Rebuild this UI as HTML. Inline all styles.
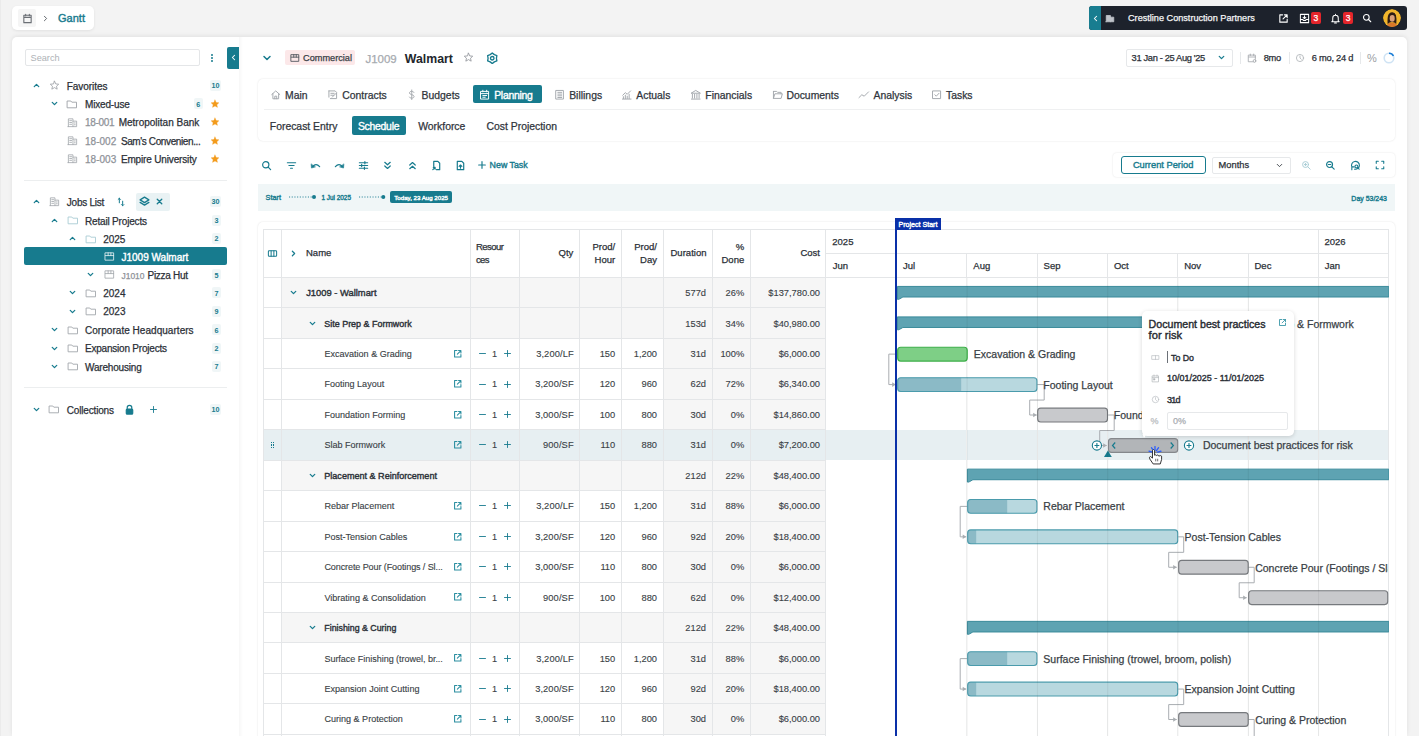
<!DOCTYPE html><html><head><meta charset="utf-8"><style>
*{box-sizing:border-box}
html,body{margin:0;padding:0}
body{width:1419px;height:736px;overflow:hidden;position:relative;background:#f3f3f3;font-family:"Liberation Sans", sans-serif}
.t{position:absolute;white-space:nowrap}
.m{-webkit-text-stroke:0.25px currentColor}
.sm{-webkit-text-stroke:0.12px currentColor}
.md{-webkit-text-stroke:0.38px currentColor}
svg{display:block}
</style></head><body><div style="position:absolute;left:12.00px;top:6.00px;width:82.00px;height:24.00px;background:#fff;border-radius:5px;box-shadow:0 1px 3px rgba(0,0,0,.08)"></div>
<div style="position:absolute;left:18.00px;top:9.00px;width:18.00px;height:18.00px;background:#f5f5f5;border-radius:2px"></div>
<svg style="position:absolute;left:21.50px;top:12.50px;" width="11" height="11" viewBox="0 0 12 12" fill="none"><g stroke="#6b6f75" stroke-width="1.2" stroke-linecap="round" stroke-linejoin="round" fill="none"><path d="M2 2.5 H10 V10.5 H2 Z M2 4.8 H10 M4 1.3 V3 M8 1.3 V3"/></g></svg>
<svg style="position:absolute;left:41.00px;top:13.50px;" width="9" height="9" viewBox="0 0 12 12" fill="none"><g stroke="#555a60" stroke-width="1.2" stroke-linecap="round" stroke-linejoin="round" fill="none"><path d="M4.5 3 L7.5 6 L4.5 9"/></g></svg>
<div class="t md" style="left:58.00px;top:13.00px;font-size:11.039417364083562px;line-height:11.039417364083562px;color:#177b8e;font-weight:400;letter-spacing:0.000px;">Gantt</div>
<div style="position:absolute;left:1089.00px;top:6.00px;width:318.00px;height:24.00px;background:#1d222c;border-radius:3px"></div>
<div style="position:absolute;left:1089.00px;top:6.00px;width:12.00px;height:24.00px;background:#187d90;border-radius:3px 0 0 3px"></div>
<svg style="position:absolute;left:1090.50px;top:13.50px;" width="9" height="9" viewBox="0 0 12 12" fill="none"><g stroke="#fff" stroke-width="1.4" stroke-linecap="round" stroke-linejoin="round" fill="none"><path d="M7.5 3 L4.5 6 L7.5 9"/></g></svg>
<svg style="position:absolute;left:1105.00px;top:13.00px;" width="10" height="10" viewBox="0 0 12 12" fill="none"><g stroke="#bfc3c9" stroke-width="1" stroke-linecap="round" stroke-linejoin="round" fill="none"><path d="M1.5 10.5 V3 H6.5 V10.5 M6.5 5 H10.5 V10.5 H1" fill="#bfc3c9"/></g></svg>
<div class="t m" style="left:1128.00px;top:14.00px;font-size:9.15px;line-height:9.15px;color:#f4f5f6;font-weight:400;">Crestline Construction Partners</div>
<svg style="position:absolute;left:1277.50px;top:12.50px;" width="11" height="11" viewBox="0 0 12 12" fill="none"><g stroke="#fff" stroke-width="1.2" stroke-linecap="round" stroke-linejoin="round" fill="none"><path d="M5 2 H2 V10 H10 V7 M7 2 H10 V5 M10 2 L5.5 6.5"/></g></svg>
<svg style="position:absolute;left:1298.50px;top:12.50px;" width="11" height="11" viewBox="0 0 12 12" fill="none"><g stroke="#fff" stroke-width="1.1" stroke-linecap="round" stroke-linejoin="round" fill="none"><path d="M1.5 1.5 H10.5 V10.5 H1.5 Z M1.5 7 H4 L5 8.3 H7 L8 7 H10.5 M6 3 V6 M4.5 4.8 L6 6.2 L7.5 4.8"/></g></svg>
<div style="position:absolute;left:1311.00px;top:12.00px;width:9.50px;height:12.00px;background:#e4252b;border-radius:2px"></div>
<div class="t m" style="left:1165.75px;width:300px;text-align:center;top:14.00px;font-size:8.5px;line-height:8.5px;color:#fff;font-weight:400;">3</div>
<svg style="position:absolute;left:1330.00px;top:12.50px;" width="11" height="11" viewBox="0 0 12 12" fill="none"><g stroke="#fff" stroke-width="1.1" stroke-linecap="round" stroke-linejoin="round" fill="none"><path d="M3 8.5 V5.5 A3 3 0 0 1 9 5.5 V8.5 L10 9.5 H2 Z M5 10.8 H7 M6 1.5 V2.5"/></g></svg>
<div style="position:absolute;left:1343.30px;top:12.00px;width:9.30px;height:12.00px;background:#e4252b;border-radius:2px"></div>
<div class="t m" style="left:1198.00px;width:300px;text-align:center;top:14.00px;font-size:8.5px;line-height:8.5px;color:#fff;font-weight:400;">3</div>
<svg style="position:absolute;left:1362.00px;top:13.00px;" width="10" height="10" viewBox="0 0 12 12" fill="none"><g stroke="#fff" stroke-width="1.3" stroke-linecap="round" stroke-linejoin="round" fill="none"><circle cx="5.2" cy="5.2" r="3.4"/><path d="M7.8 7.8 L10.5 10.5"/></g></svg>
<svg style="position:absolute;left:1383px;top:9px" width="18" height="18" viewBox="0 0 18 18"><defs><clipPath id="av"><circle cx="9" cy="9" r="9"/></clipPath></defs><g clip-path="url(#av)"><circle cx="9" cy="9" r="9" fill="#f0b52c"/><path d="M3 19 Q3.5 14 9 13.5 Q14.5 14 15 19 Z" fill="#d9782a"/><path d="M4.6 15 Q4.2 8 5.5 5.5 Q7 3 9.3 3.2 Q12 3.3 12.9 6 Q13.8 9 13.3 15 Q11.5 13 9 13 Q6.5 13 4.6 15 Z" fill="#2e1c14"/><ellipse cx="9.2" cy="9.4" rx="2.5" ry="3.3" fill="#d8a07a"/></g></svg>
<div style="position:absolute;left:0.00px;top:0.00px;width:1.00px;height:736.00px;background:#ebebeb"></div>
<div style="position:absolute;left:12.00px;top:37.00px;width:1395.00px;height:699.00px;background:#fff;border-radius:5px 5px 0 0;box-shadow:0 -1px 4px rgba(0,0,0,.08)"></div>
<div style="position:absolute;left:239.00px;top:37.00px;width:4.00px;height:699.00px;background:linear-gradient(90deg,#f7f7f7,#fff)"></div>
<div style="position:absolute;left:24.50px;top:49.30px;width:175.20px;height:17.20px;border:1px solid #e4e6e8;border-radius:2px;background:#fff"></div>
<div class="t m" style="left:30.50px;top:54.00px;font-size:9.2px;line-height:9.2px;color:#aeb2b6;font-weight:400;-webkit-text-stroke:0">Search</div>
<div style="position:absolute;left:211.00px;top:53.70px;width:2.00px;height:2.00px;background:#177b8e;border-radius:1px"></div>
<div style="position:absolute;left:211.00px;top:57.00px;width:2.00px;height:2.00px;background:#177b8e;border-radius:1px"></div>
<div style="position:absolute;left:211.00px;top:60.30px;width:2.00px;height:2.00px;background:#177b8e;border-radius:1px"></div>
<div style="position:absolute;left:227.30px;top:46.50px;width:11.80px;height:22.50px;background:#177b8e;border-radius:2px 0 0 2px"></div>
<svg style="position:absolute;left:228.70px;top:53.20px;" width="9" height="9" viewBox="0 0 12 12" fill="none"><g stroke="#fff" stroke-width="1.4" stroke-linecap="round" stroke-linejoin="round" fill="none"><path d="M7.5 3 L4.5 6 L7.5 9"/></g></svg>
<svg style="position:absolute;left:31.80px;top:81.00px;" width="9" height="9" viewBox="0 0 12 12" fill="none"><g stroke="#177b8e" stroke-width="1.7" stroke-linecap="round" stroke-linejoin="round" fill="none"><path d="M3 7.5 L6 4.5 L9 7.5"/></g></svg>
<svg style="position:absolute;left:48.90px;top:80.00px;" width="11" height="11" viewBox="0 0 12 12" fill="none"><g stroke="#9a9ea4" stroke-width="0.9" stroke-linecap="round" stroke-linejoin="round" fill="none"><path d="M6 1.3 L7.4 4.3 L10.6 4.6 L8.2 6.8 L8.9 10 L6 8.3 L3.1 10 L3.8 6.8 L1.4 4.6 L4.6 4.3 Z"/></g></svg>
<div class="t m" style="left:66.80px;top:82.00px;font-size:10px;line-height:10px;color:#2b3037;font-weight:400;letter-spacing:-0.066px;">Favorites</div>
<div style="position:absolute;left:210.00px;top:80.00px;width:11.00px;height:11.00px;background:#f0f6f7;border-radius:2px"></div>
<div class="t" style="left:65.50px;width:300px;text-align:center;top:82.00px;font-size:7.2px;line-height:7.2px;color:#177b8e;font-weight:700;">10</div>
<svg style="position:absolute;left:49.90px;top:99.40px;" width="9" height="9" viewBox="0 0 12 12" fill="none"><g stroke="#177b8e" stroke-width="1.7" stroke-linecap="round" stroke-linejoin="round" fill="none"><path d="M3 4.5 L6 7.5 L9 4.5"/></g></svg>
<svg style="position:absolute;left:66.30px;top:97.90px;" width="12" height="12" viewBox="0 0 12 12" fill="none"><g stroke="#9ea2a7" stroke-width="0.9" stroke-linecap="round" stroke-linejoin="round" fill="none"><path d="M1.5 3 H4.8 L5.8 4.2 H10.5 V9.8 H1.5 Z"/></g></svg>
<div class="t m" style="left:85.00px;top:100.00px;font-size:10px;line-height:10px;color:#2b3037;font-weight:400;letter-spacing:-0.166px;">Mixed-use</div>
<div style="position:absolute;left:193.70px;top:98.40px;width:9.00px;height:11.00px;background:#f0f6f7;border-radius:2px"></div>
<div class="t" style="left:48.20px;width:300px;text-align:center;top:101.00px;font-size:7.2px;line-height:7.2px;color:#177b8e;font-weight:700;">6</div>
<svg style="position:absolute;left:210.00px;top:98.90px;" width="10" height="10" viewBox="0 0 12 12" fill="none"><g stroke="#f39b1c" stroke-width="0.5" stroke-linecap="round" stroke-linejoin="round" fill="none"><path d="M6 1.3 L7.4 4.3 L10.6 4.6 L8.2 6.8 L8.9 10 L6 8.3 L3.1 10 L3.8 6.8 L1.4 4.6 L4.6 4.3 Z" fill="#f39b1c" stroke="#f39b1c"/></g></svg>
<svg style="position:absolute;left:67.00px;top:116.60px;" width="11" height="11" viewBox="0 0 12 12" fill="none"><g stroke="#a3a7ac" stroke-width="0.9" stroke-linecap="round" stroke-linejoin="round" fill="none"><path d="M1.5 10.5 V2 H6.5 V10.5 M6.5 4.5 H10.5 V10.5 H1 M3 4 H5 M3 6 H5 M3 8 H5 M8 6.5 H9 M8 8.5 H9"/></g></svg>
<div class="t m" style="left:85.00px;top:118.00px;font-size:10px;line-height:10px;color:#8e9298;font-weight:400;letter-spacing:-0.308px;">18-001</div>
<div class="t m" style="left:118.70px;top:118.00px;font-size:10px;line-height:10px;color:#2b3037;font-weight:400;letter-spacing:-0.000px;">Metropolitan Bank</div>
<svg style="position:absolute;left:210.00px;top:117.10px;" width="10" height="10" viewBox="0 0 12 12" fill="none"><g stroke="#f39b1c" stroke-width="0.5" stroke-linecap="round" stroke-linejoin="round" fill="none"><path d="M6 1.3 L7.4 4.3 L10.6 4.6 L8.2 6.8 L8.9 10 L6 8.3 L3.1 10 L3.8 6.8 L1.4 4.6 L4.6 4.3 Z" fill="#f39b1c" stroke="#f39b1c"/></g></svg>
<svg style="position:absolute;left:67.00px;top:135.00px;" width="11" height="11" viewBox="0 0 12 12" fill="none"><g stroke="#a3a7ac" stroke-width="0.9" stroke-linecap="round" stroke-linejoin="round" fill="none"><path d="M1.5 10.5 V2 H6.5 V10.5 M6.5 4.5 H10.5 V10.5 H1 M3 4 H5 M3 6 H5 M3 8 H5 M8 6.5 H9 M8 8.5 H9"/></g></svg>
<div class="t m" style="left:85.00px;top:137.00px;font-size:10px;line-height:10px;color:#8e9298;font-weight:400;letter-spacing:0.012px;">18-002</div>
<div class="t m" style="left:120.90px;top:137.00px;font-size:10px;line-height:10px;color:#2b3037;font-weight:400;letter-spacing:-0.382px;">Sam&#39;s Convenien...</div>
<svg style="position:absolute;left:210.00px;top:135.50px;" width="10" height="10" viewBox="0 0 12 12" fill="none"><g stroke="#f39b1c" stroke-width="0.5" stroke-linecap="round" stroke-linejoin="round" fill="none"><path d="M6 1.3 L7.4 4.3 L10.6 4.6 L8.2 6.8 L8.9 10 L6 8.3 L3.1 10 L3.8 6.8 L1.4 4.6 L4.6 4.3 Z" fill="#f39b1c" stroke="#f39b1c"/></g></svg>
<svg style="position:absolute;left:67.00px;top:153.20px;" width="11" height="11" viewBox="0 0 12 12" fill="none"><g stroke="#a3a7ac" stroke-width="0.9" stroke-linecap="round" stroke-linejoin="round" fill="none"><path d="M1.5 10.5 V2 H6.5 V10.5 M6.5 4.5 H10.5 V10.5 H1 M3 4 H5 M3 6 H5 M3 8 H5 M8 6.5 H9 M8 8.5 H9"/></g></svg>
<div class="t m" style="left:85.00px;top:155.00px;font-size:10px;line-height:10px;color:#8e9298;font-weight:400;letter-spacing:0.012px;">18-003</div>
<div class="t m" style="left:120.90px;top:155.00px;font-size:10px;line-height:10px;color:#2b3037;font-weight:400;letter-spacing:-0.153px;">Empire University</div>
<svg style="position:absolute;left:210.00px;top:153.70px;" width="10" height="10" viewBox="0 0 12 12" fill="none"><g stroke="#f39b1c" stroke-width="0.5" stroke-linecap="round" stroke-linejoin="round" fill="none"><path d="M6 1.3 L7.4 4.3 L10.6 4.6 L8.2 6.8 L8.9 10 L6 8.3 L3.1 10 L3.8 6.8 L1.4 4.6 L4.6 4.3 Z" fill="#f39b1c" stroke="#f39b1c"/></g></svg>
<div style="position:absolute;left:24.00px;top:179.80px;width:203.00px;height:1.00px;background:#eceeef"></div>
<svg style="position:absolute;left:31.80px;top:197.30px;" width="9" height="9" viewBox="0 0 12 12" fill="none"><g stroke="#177b8e" stroke-width="1.7" stroke-linecap="round" stroke-linejoin="round" fill="none"><path d="M3 7.5 L6 4.5 L9 7.5"/></g></svg>
<svg style="position:absolute;left:48.90px;top:196.30px;" width="11" height="11" viewBox="0 0 12 12" fill="none"><g stroke="#a3a7ac" stroke-width="0.9" stroke-linecap="round" stroke-linejoin="round" fill="none"><path d="M1.5 10.5 V2 H6.5 V10.5 M6.5 4.5 H10.5 V10.5 H1 M3 4 H5 M3 6 H5 M3 8 H5 M8 6.5 H9 M8 8.5 H9"/></g></svg>
<div class="t m" style="left:66.80px;top:198.00px;font-size:10px;line-height:10px;color:#2b3037;font-weight:400;letter-spacing:-0.233px;">Jobs List</div>
<svg style="position:absolute;left:115.60px;top:196.80px;" width="10" height="10" viewBox="0 0 12 12" fill="none"><g stroke="#177b8e" stroke-width="1.2" stroke-linecap="round" stroke-linejoin="round" fill="none"><path d="M4 7 V1.5 M2.6 2.9 L4 1.5 L5.4 2.9 M8 5 V10.5 M6.6 9.1 L8 10.5 L9.4 9.1"/></g></svg>
<div style="position:absolute;left:135.60px;top:192.60px;width:34.40px;height:18.00px;background:#e9f2f4;border-radius:2px"></div>
<svg style="position:absolute;left:139.30px;top:196.30px;" width="11" height="11" viewBox="0 0 12 12" fill="none"><g stroke="#177b8e" stroke-width="1.4" stroke-linecap="round" stroke-linejoin="round" fill="none"><path d="M6 1.2 L10.8 4.2 L6 7.2 L1.2 4.2 Z M1.2 7 L6 10 L10.8 7"/></g></svg>
<svg style="position:absolute;left:155.20px;top:197.30px;" width="9" height="9" viewBox="0 0 12 12" fill="none"><g stroke="#177b8e" stroke-width="1.8" stroke-linecap="round" stroke-linejoin="round" fill="none"><path d="M3 3 L9 9 M9 3 L3 9"/></g></svg>
<div style="position:absolute;left:210.00px;top:196.30px;width:11.00px;height:11.00px;background:#f0f6f7;border-radius:2px"></div>
<div class="t" style="left:65.50px;width:300px;text-align:center;top:198.00px;font-size:7.2px;line-height:7.2px;color:#177b8e;font-weight:700;">30</div>
<svg style="position:absolute;left:50.00px;top:215.80px;" width="9" height="9" viewBox="0 0 12 12" fill="none"><g stroke="#177b8e" stroke-width="1.7" stroke-linecap="round" stroke-linejoin="round" fill="none"><path d="M3 7.5 L6 4.5 L9 7.5"/></g></svg>
<svg style="position:absolute;left:66.60px;top:214.30px;" width="12" height="12" viewBox="0 0 12 12" fill="none"><g stroke="#a9ccd4" stroke-width="0.9" stroke-linecap="round" stroke-linejoin="round" fill="none"><path d="M1.5 3 H4.8 L5.8 4.2 H10.5 V9.8 H1.5 Z"/></g></svg>
<div class="t m" style="left:85.00px;top:217.00px;font-size:10px;line-height:10px;color:#2b3037;font-weight:400;letter-spacing:-0.176px;">Retail Projects</div>
<div style="position:absolute;left:212.00px;top:214.80px;width:9.00px;height:11.00px;background:#f0f6f7;border-radius:2px"></div>
<div class="t" style="left:66.50px;width:300px;text-align:center;top:217.00px;font-size:7.2px;line-height:7.2px;color:#177b8e;font-weight:700;">3</div>
<svg style="position:absolute;left:68.20px;top:234.00px;" width="9" height="9" viewBox="0 0 12 12" fill="none"><g stroke="#177b8e" stroke-width="1.7" stroke-linecap="round" stroke-linejoin="round" fill="none"><path d="M3 7.5 L6 4.5 L9 7.5"/></g></svg>
<svg style="position:absolute;left:84.80px;top:232.50px;" width="12" height="12" viewBox="0 0 12 12" fill="none"><g stroke="#a9ccd4" stroke-width="0.9" stroke-linecap="round" stroke-linejoin="round" fill="none"><path d="M1.5 3 H4.8 L5.8 4.2 H10.5 V9.8 H1.5 Z"/></g></svg>
<div class="t m" style="left:103.20px;top:235.00px;font-size:10px;line-height:10px;color:#2b3037;font-weight:400;letter-spacing:-0.082px;">2025</div>
<div style="position:absolute;left:212.00px;top:233.00px;width:9.00px;height:11.00px;background:#f0f6f7;border-radius:2px"></div>
<div class="t" style="left:66.50px;width:300px;text-align:center;top:235.00px;font-size:7.2px;line-height:7.2px;color:#177b8e;font-weight:700;">2</div>
<div style="position:absolute;left:24.00px;top:247.30px;width:203.00px;height:18.00px;background:#177b8e;border-radius:2px"></div>
<svg style="position:absolute;left:103.50px;top:250.80px;" width="11" height="11" viewBox="0 0 12 12" fill="none"><g stroke="#e6f1f3" stroke-width="0.9" stroke-linecap="round" stroke-linejoin="round" fill="none"><path d="M1.5 2 H10.5 V10 H1.5 Z M1.5 5 H10.5 M4.5 2 V5 M7.5 2 V5"/></g></svg>
<div class="t md" style="left:121.50px;top:253.00px;font-size:10.018457512674937px;line-height:10.018457512674937px;color:#fff;font-weight:400;letter-spacing:0.000px;">J1009 Walmart</div>
<svg style="position:absolute;left:86.40px;top:270.40px;" width="9" height="9" viewBox="0 0 12 12" fill="none"><g stroke="#177b8e" stroke-width="1.7" stroke-linecap="round" stroke-linejoin="round" fill="none"><path d="M3 4.5 L6 7.5 L9 4.5"/></g></svg>
<svg style="position:absolute;left:103.50px;top:269.40px;" width="11" height="11" viewBox="0 0 12 12" fill="none"><g stroke="#a3a7ac" stroke-width="0.9" stroke-linecap="round" stroke-linejoin="round" fill="none"><path d="M1.5 2 H10.5 V10 H1.5 Z M1.5 5 H10.5 M4.5 2 V5 M7.5 2 V5"/></g></svg>
<div class="t m" style="left:121.50px;top:272.00px;font-size:8.441335015483427px;line-height:8.441335015483427px;color:#8e9298;font-weight:400;letter-spacing:0.000px;">J1010</div>
<div class="t m" style="left:147.50px;top:271.00px;font-size:10px;line-height:10px;color:#2b3037;font-weight:400;letter-spacing:-0.287px;">Pizza Hut</div>
<div style="position:absolute;left:212.00px;top:269.40px;width:9.00px;height:11.00px;background:#f0f6f7;border-radius:2px"></div>
<div class="t" style="left:66.50px;width:300px;text-align:center;top:272.00px;font-size:7.2px;line-height:7.2px;color:#177b8e;font-weight:700;">5</div>
<svg style="position:absolute;left:68.20px;top:288.40px;" width="9" height="9" viewBox="0 0 12 12" fill="none"><g stroke="#177b8e" stroke-width="1.7" stroke-linecap="round" stroke-linejoin="round" fill="none"><path d="M3 4.5 L6 7.5 L9 4.5"/></g></svg>
<svg style="position:absolute;left:84.80px;top:286.90px;" width="12" height="12" viewBox="0 0 12 12" fill="none"><g stroke="#a3a7ac" stroke-width="0.9" stroke-linecap="round" stroke-linejoin="round" fill="none"><path d="M1.5 3 H4.8 L5.8 4.2 H10.5 V9.8 H1.5 Z"/></g></svg>
<div class="t m" style="left:103.20px;top:289.00px;font-size:10px;line-height:10px;color:#2b3037;font-weight:400;letter-spacing:0.018px;">2024</div>
<div style="position:absolute;left:212.00px;top:287.40px;width:9.00px;height:11.00px;background:#f0f6f7;border-radius:2px"></div>
<div class="t" style="left:66.50px;width:300px;text-align:center;top:290.00px;font-size:7.2px;line-height:7.2px;color:#177b8e;font-weight:700;">7</div>
<svg style="position:absolute;left:68.20px;top:306.70px;" width="9" height="9" viewBox="0 0 12 12" fill="none"><g stroke="#177b8e" stroke-width="1.7" stroke-linecap="round" stroke-linejoin="round" fill="none"><path d="M3 4.5 L6 7.5 L9 4.5"/></g></svg>
<svg style="position:absolute;left:84.80px;top:305.20px;" width="12" height="12" viewBox="0 0 12 12" fill="none"><g stroke="#a3a7ac" stroke-width="0.9" stroke-linecap="round" stroke-linejoin="round" fill="none"><path d="M1.5 3 H4.8 L5.8 4.2 H10.5 V9.8 H1.5 Z"/></g></svg>
<div class="t m" style="left:103.20px;top:307.00px;font-size:10px;line-height:10px;color:#2b3037;font-weight:400;letter-spacing:0.018px;">2023</div>
<div style="position:absolute;left:212.00px;top:305.70px;width:9.00px;height:11.00px;background:#f0f6f7;border-radius:2px"></div>
<div class="t" style="left:66.50px;width:300px;text-align:center;top:308.00px;font-size:7.2px;line-height:7.2px;color:#177b8e;font-weight:700;">9</div>
<svg style="position:absolute;left:50.00px;top:325.40px;" width="9" height="9" viewBox="0 0 12 12" fill="none"><g stroke="#177b8e" stroke-width="1.7" stroke-linecap="round" stroke-linejoin="round" fill="none"><path d="M3 4.5 L6 7.5 L9 4.5"/></g></svg>
<svg style="position:absolute;left:66.60px;top:323.90px;" width="12" height="12" viewBox="0 0 12 12" fill="none"><g stroke="#a3a7ac" stroke-width="0.9" stroke-linecap="round" stroke-linejoin="round" fill="none"><path d="M1.5 3 H4.8 L5.8 4.2 H10.5 V9.8 H1.5 Z"/></g></svg>
<div class="t m" style="left:85.00px;top:326.00px;font-size:10px;line-height:10px;color:#2b3037;font-weight:400;letter-spacing:0.036px;">Corporate Headquarters</div>
<div style="position:absolute;left:212.00px;top:324.40px;width:9.00px;height:11.00px;background:#f0f6f7;border-radius:2px"></div>
<div class="t" style="left:66.50px;width:300px;text-align:center;top:327.00px;font-size:7.2px;line-height:7.2px;color:#177b8e;font-weight:700;">6</div>
<svg style="position:absolute;left:50.00px;top:343.50px;" width="9" height="9" viewBox="0 0 12 12" fill="none"><g stroke="#177b8e" stroke-width="1.7" stroke-linecap="round" stroke-linejoin="round" fill="none"><path d="M3 4.5 L6 7.5 L9 4.5"/></g></svg>
<svg style="position:absolute;left:66.60px;top:342.00px;" width="12" height="12" viewBox="0 0 12 12" fill="none"><g stroke="#a3a7ac" stroke-width="0.9" stroke-linecap="round" stroke-linejoin="round" fill="none"><path d="M1.5 3 H4.8 L5.8 4.2 H10.5 V9.8 H1.5 Z"/></g></svg>
<div class="t m" style="left:85.00px;top:344.00px;font-size:10px;line-height:10px;color:#2b3037;font-weight:400;letter-spacing:-0.212px;">Expansion Projects</div>
<div style="position:absolute;left:212.00px;top:342.50px;width:9.00px;height:11.00px;background:#f0f6f7;border-radius:2px"></div>
<div class="t" style="left:66.50px;width:300px;text-align:center;top:345.00px;font-size:7.2px;line-height:7.2px;color:#177b8e;font-weight:700;">2</div>
<svg style="position:absolute;left:50.00px;top:361.90px;" width="9" height="9" viewBox="0 0 12 12" fill="none"><g stroke="#177b8e" stroke-width="1.7" stroke-linecap="round" stroke-linejoin="round" fill="none"><path d="M3 4.5 L6 7.5 L9 4.5"/></g></svg>
<svg style="position:absolute;left:66.60px;top:360.40px;" width="12" height="12" viewBox="0 0 12 12" fill="none"><g stroke="#a3a7ac" stroke-width="0.9" stroke-linecap="round" stroke-linejoin="round" fill="none"><path d="M1.5 3 H4.8 L5.8 4.2 H10.5 V9.8 H1.5 Z"/></g></svg>
<div class="t m" style="left:85.00px;top:363.00px;font-size:10px;line-height:10px;color:#2b3037;font-weight:400;letter-spacing:-0.175px;">Warehousing</div>
<div style="position:absolute;left:212.00px;top:360.90px;width:9.00px;height:11.00px;background:#f0f6f7;border-radius:2px"></div>
<div class="t" style="left:66.50px;width:300px;text-align:center;top:363.00px;font-size:7.2px;line-height:7.2px;color:#177b8e;font-weight:700;">7</div>
<div style="position:absolute;left:24.00px;top:386.80px;width:203.00px;height:1.00px;background:#eceeef"></div>
<svg style="position:absolute;left:31.80px;top:404.90px;" width="9" height="9" viewBox="0 0 12 12" fill="none"><g stroke="#177b8e" stroke-width="1.7" stroke-linecap="round" stroke-linejoin="round" fill="none"><path d="M3 4.5 L6 7.5 L9 4.5"/></g></svg>
<svg style="position:absolute;left:48.40px;top:403.40px;" width="12" height="12" viewBox="0 0 12 12" fill="none"><g stroke="#a3a7ac" stroke-width="0.9" stroke-linecap="round" stroke-linejoin="round" fill="none"><path d="M1.5 3 H4.8 L5.8 4.2 H10.5 V9.8 H1.5 Z"/></g></svg>
<div class="t m" style="left:66.80px;top:406.00px;font-size:10px;line-height:10px;color:#2b3037;font-weight:400;letter-spacing:-0.171px;">Collections</div>
<svg style="position:absolute;left:124.00px;top:403.90px;" width="11" height="11" viewBox="0 0 12 12" fill="none"><g stroke="#177b8e" stroke-width="1.3" stroke-linecap="round" stroke-linejoin="round" fill="none"><path d="M3.5 5.5 V4 A2.5 2.5 0 0 1 8.5 4 V5.5" /><rect x="2.5" y="5.5" width="7" height="5.5" rx="1" fill="#177b8e"/></g></svg>
<svg style="position:absolute;left:149.10px;top:404.90px;" width="9" height="9" viewBox="0 0 12 12" fill="none"><g stroke="#177b8e" stroke-width="1.2" stroke-linecap="round" stroke-linejoin="round" fill="none"><path d="M6 2 V10 M2 6 H10"/></g></svg>
<div style="position:absolute;left:210.00px;top:403.90px;width:11.00px;height:11.00px;background:#f0f6f7;border-radius:2px"></div>
<div class="t" style="left:65.50px;width:300px;text-align:center;top:406.00px;font-size:7.2px;line-height:7.2px;color:#177b8e;font-weight:700;">10</div>
<svg style="position:absolute;left:260.80px;top:52.00px;" width="12" height="12" viewBox="0 0 12 12" fill="none"><g stroke="#177b8e" stroke-width="1.5" stroke-linecap="round" stroke-linejoin="round" fill="none"><path d="M3 4.5 L6 7.5 L9 4.5"/></g></svg>
<div style="position:absolute;left:285.00px;top:50.00px;width:70.30px;height:15.00px;background:#fce8e9;border-radius:2px"></div>
<svg style="position:absolute;left:289.50px;top:52.50px;" width="10" height="10" viewBox="0 0 12 12" fill="none"><g stroke="#555a61" stroke-width="1.1" stroke-linecap="round" stroke-linejoin="round" fill="none"><path d="M1.5 2 H10.5 V10 H1.5 Z M1.5 5 H10.5 M4.5 2 V5 M7.5 2 V5"/></g></svg>
<div class="t m" style="left:303.00px;top:54.00px;font-size:9.2px;line-height:9.2px;color:#3a3f46;font-weight:400;">Commercial</div>
<div class="t m" style="left:365.40px;top:54.00px;font-size:11.5px;line-height:11.5px;color:#a6aaaf;font-weight:400;">J1009</div>
<div class="t" style="left:404.80px;top:53.00px;font-size:12.3px;line-height:12.3px;color:#22262c;font-weight:700;">Walmart</div>
<svg style="position:absolute;left:462.50px;top:52.30px;" width="11" height="11" viewBox="0 0 12 12" fill="none"><g stroke="#8f9399" stroke-width="0.9" stroke-linecap="round" stroke-linejoin="round" fill="none"><path d="M6 1.3 L7.4 4.3 L10.6 4.6 L8.2 6.8 L8.9 10 L6 8.3 L3.1 10 L3.8 6.8 L1.4 4.6 L4.6 4.3 Z"/></g></svg>
<svg style="position:absolute;left:486.35px;top:51.55px;" width="12.5" height="12.5" viewBox="0 0 12 12" fill="none"><g stroke="#177b8e" stroke-width="1.3" stroke-linecap="round" stroke-linejoin="round" fill="none"><path d="M6.00 0.90 L8.00 2.54 L10.42 3.45 L10.00 6.00 L10.42 8.55 L8.00 9.46 L6.00 11.10 L4.00 9.46 L1.58 8.55 L2.00 6.00 L1.58 3.45 L4.00 2.54 Z"/><circle cx="6" cy="6" r="1.7"/></g></svg>
<div style="position:absolute;left:1126.00px;top:49.00px;width:107.40px;height:17.70px;border:1px solid #e6e8ea;border-radius:2px;background:#fff"></div>
<div class="t m" style="left:1131.60px;top:54.00px;font-size:9.3px;line-height:9.3px;color:#2b3037;font-weight:400;letter-spacing:-0.342px;">31 Jan - 25 Aug &#39;25</div>
<svg style="position:absolute;left:1216.50px;top:53.30px;" width="9" height="9" viewBox="0 0 12 12" fill="none"><g stroke="#177b8e" stroke-width="1.7" stroke-linecap="round" stroke-linejoin="round" fill="none"><path d="M3 4.5 L6 7.5 L9 4.5"/></g></svg>
<div style="position:absolute;left:1240.00px;top:52.00px;width:1.00px;height:12.00px;background:#e6e8ea"></div>
<svg style="position:absolute;left:1247.00px;top:52.80px;" width="10" height="10" viewBox="0 0 12 12" fill="none"><g stroke="#a3a7ac" stroke-width="1" stroke-linecap="round" stroke-linejoin="round" fill="none"><path d="M2 2.5 H10 V10.5 H2 Z M2 4.8 H10 M4 1.3 V3 M8 1.3 V3"/><circle cx="9" cy="9.5" r="1.6" fill="#fff"/></g></svg>
<div class="t m" style="left:1263.70px;top:54.00px;font-size:9.3px;line-height:9.3px;color:#2b3037;font-weight:400;letter-spacing:-0.296px;">8mo</div>
<div style="position:absolute;left:1288.60px;top:52.00px;width:1.00px;height:12.00px;background:#e6e8ea"></div>
<svg style="position:absolute;left:1295.00px;top:52.80px;" width="10" height="10" viewBox="0 0 12 12" fill="none"><g stroke="#b0b4b8" stroke-width="1" stroke-linecap="round" stroke-linejoin="round" fill="none"><circle cx="6" cy="6" r="4.3"/><path d="M6 3.5 V6 L7.5 7.5"/></g></svg>
<div class="t m" style="left:1311.70px;top:54.00px;font-size:9.3px;line-height:9.3px;color:#2b3037;font-weight:400;letter-spacing:-0.238px;">6 mo, 24 d</div>
<div style="position:absolute;left:1360.20px;top:52.00px;width:1.00px;height:12.00px;background:#e6e8ea"></div>
<div class="t m" style="left:1221.80px;width:300px;text-align:center;top:53.00px;font-size:11px;line-height:11px;color:#9a9ea3;font-weight:400;-webkit-text-stroke:0">%</div>
<svg style="position:absolute;left:1383px;top:51.8px" width="12" height="12" viewBox="0 0 12 12"><circle cx="6" cy="6" r="4.8" stroke="#cfe3f4" stroke-width="1.6" fill="none"/><path d="M6 1.2 A4.8 4.8 0 0 1 10.4 4" stroke="#1c7ed6" stroke-width="1.6" fill="none"/></svg>
<div style="position:absolute;left:257.50px;top:79.20px;width:1137.30px;height:62.00px;background:#fff;border-radius:5px;box-shadow:0 0 2px rgba(0,0,0,.12)"></div>
<div style="position:absolute;left:263.50px;top:109.30px;width:1126.00px;height:1.20px;background:#eff0f1"></div>
<div style="position:absolute;left:473.00px;top:85.00px;width:69.00px;height:18.40px;background:#177b8e;border-radius:2px"></div>
<svg style="position:absolute;left:270.25px;top:88.85px;" width="11.5" height="11.5" viewBox="0 0 12 12" fill="none"><g stroke="#a3a7ac" stroke-width="1" stroke-linecap="round" stroke-linejoin="round" fill="none"><path d="M1.8 5.8 L6 2 L10.2 5.8 M3 4.8 V10.2 H9 V4.8 M5 10.2 V7.5 H7 V10.2"/></g></svg>
<div class="t m" style="left:285.00px;top:91.00px;font-size:10.4px;line-height:10.4px;color:#30353c;font-weight:400;">Main</div>
<svg style="position:absolute;left:327.25px;top:88.85px;" width="11.5" height="11.5" viewBox="0 0 12 12" fill="none"><g stroke="#a3a7ac" stroke-width="1" stroke-linecap="round" stroke-linejoin="round" fill="none"><path d="M2 2 H8.5 L10 3.5 V10 H3.5 M2 2 V8.5 M4 4.5 H7.5 M4 6.5 H7 M5.5 8.5 L9.5 4.5"/></g></svg>
<div class="t m" style="left:342.30px;top:91.00px;font-size:10.4px;line-height:10.4px;color:#30353c;font-weight:400;">Contracts</div>
<svg style="position:absolute;left:406.25px;top:88.85px;" width="11.5" height="11.5" viewBox="0 0 12 12" fill="none"><g stroke="#a3a7ac" stroke-width="1" stroke-linecap="round" stroke-linejoin="round" fill="none"><path d="M8.3 3.5 C7.5 2 3.5 2 3.6 4.2 C3.7 6.2 8.4 5.6 8.4 7.8 C8.4 10 4.3 10 3.5 8.5 M6 1 V11"/></g></svg>
<div class="t m" style="left:421.60px;top:91.00px;font-size:10.4px;line-height:10.4px;color:#30353c;font-weight:400;">Budgets</div>
<svg style="position:absolute;left:479.25px;top:88.85px;" width="11.5" height="11.5" viewBox="0 0 12 12" fill="none"><g stroke="#fff" stroke-width="1" stroke-linecap="round" stroke-linejoin="round" fill="none"><path d="M2 2.5 H10 V10.5 H2 Z M2 4.8 H10 M4 1.3 V3 M8 1.3 V3 M4 6.8 H8 M4 8.6 H6.5"/></g></svg>
<div class="t md" style="left:494.20px;top:91.00px;font-size:10.4px;line-height:10.4px;color:#fff;font-weight:400;letter-spacing:-0.25px">Planning</div>
<svg style="position:absolute;left:554.25px;top:88.85px;" width="11.5" height="11.5" viewBox="0 0 12 12" fill="none"><g stroke="#a3a7ac" stroke-width="1" stroke-linecap="round" stroke-linejoin="round" fill="none"><path d="M2.2 1.5 H9.8 V10.5 H2.2 Z M4 3.5 H8 M4 5.3 H8 M4 7.1 H8 M4 8.9 H8"/></g></svg>
<div class="t m" style="left:569.20px;top:91.00px;font-size:10.4px;line-height:10.4px;color:#30353c;font-weight:400;">Billings</div>
<svg style="position:absolute;left:621.25px;top:88.85px;" width="11.5" height="11.5" viewBox="0 0 12 12" fill="none"><g stroke="#a3a7ac" stroke-width="1" stroke-linecap="round" stroke-linejoin="round" fill="none"><path d="M1.5 10.5 H10.5 M2.5 10 V8 M4.5 10 V6.5 M6.5 10 V7.5 M8.5 10 V5.5 M1.8 6.5 L4.5 3.8 L6.5 5.5 L10 2"/></g></svg>
<div class="t m" style="left:636.30px;top:91.00px;font-size:10.4px;line-height:10.4px;color:#30353c;font-weight:400;">Actuals</div>
<svg style="position:absolute;left:689.95px;top:88.85px;" width="11.5" height="11.5" viewBox="0 0 12 12" fill="none"><g stroke="#a3a7ac" stroke-width="1" stroke-linecap="round" stroke-linejoin="round" fill="none"><path d="M1.5 4.2 L6 1.5 L10.5 4.2 Z M2.5 5.5 V9.5 M4.8 5.5 V9.5 M7.2 5.5 V9.5 M9.5 5.5 V9.5 M1.5 10.5 H10.5"/></g></svg>
<div class="t m" style="left:705.30px;top:91.00px;font-size:10.4px;line-height:10.4px;color:#30353c;font-weight:400;">Financials</div>
<svg style="position:absolute;left:771.55px;top:88.85px;" width="11.5" height="11.5" viewBox="0 0 12 12" fill="none"><g stroke="#a3a7ac" stroke-width="1" stroke-linecap="round" stroke-linejoin="round" fill="none"><path d="M1.5 2.5 H4.8 L5.8 3.5 H9.5 V5 M1.5 2.5 V9.8 H9.5 L10.8 5 H3 L1.5 9.8"/></g></svg>
<div class="t m" style="left:786.40px;top:91.00px;font-size:10.4px;line-height:10.4px;color:#30353c;font-weight:400;">Documents</div>
<svg style="position:absolute;left:858.35px;top:88.85px;" width="11.5" height="11.5" viewBox="0 0 12 12" fill="none"><g stroke="#a3a7ac" stroke-width="1" stroke-linecap="round" stroke-linejoin="round" fill="none"><path d="M1 9 L4 6 L6.5 7.5 L11 3"/></g></svg>
<div class="t m" style="left:873.50px;top:91.00px;font-size:10.4px;line-height:10.4px;color:#30353c;font-weight:400;">Analysis</div>
<svg style="position:absolute;left:931.05px;top:88.85px;" width="11.5" height="11.5" viewBox="0 0 12 12" fill="none"><g stroke="#a3a7ac" stroke-width="1" stroke-linecap="round" stroke-linejoin="round" fill="none"><path d="M2 2 H10 V10 H2 Z M4 6 L5.5 7.5 L8.3 4.5"/></g></svg>
<div class="t m" style="left:946.00px;top:91.00px;font-size:10.4px;line-height:10.4px;color:#30353c;font-weight:400;">Tasks</div>
<div style="position:absolute;left:351.50px;top:116.30px;width:54.50px;height:18.30px;background:#177b8e;border-radius:2px"></div>
<div class="t m" style="left:269.80px;top:122.00px;font-size:10.4px;line-height:10.4px;color:#30353c;font-weight:400;">Forecast Entry</div>
<div class="t md" style="left:357.90px;top:122.00px;font-size:10.4px;line-height:10.4px;color:#fff;font-weight:400;letter-spacing:-0.25px">Schedule</div>
<div class="t m" style="left:418.20px;top:122.00px;font-size:10.4px;line-height:10.4px;color:#30353c;font-weight:400;">Workforce</div>
<div class="t m" style="left:486.50px;top:122.00px;font-size:10.4px;line-height:10.4px;color:#30353c;font-weight:400;">Cost Projection</div>
<svg style="position:absolute;left:261.10px;top:159.50px;" width="11" height="11" viewBox="0 0 12 12" fill="none"><g stroke="#177b8e" stroke-width="1.3" stroke-linecap="round" stroke-linejoin="round" fill="none"><circle cx="5.2" cy="5.2" r="3.4"/><path d="M7.8 7.8 L10.5 10.5"/></g></svg>
<svg style="position:absolute;left:285.70px;top:159.50px;" width="11" height="11" viewBox="0 0 12 12" fill="none"><g stroke="#177b8e" stroke-width="1.3" stroke-linecap="round" stroke-linejoin="round" fill="none"><path d="M1.5 3 H10.5 M3.2 6 H8.8 M5 9 H7"/></g></svg>
<svg style="position:absolute;left:309.80px;top:159.50px;" width="11" height="11" viewBox="0 0 12 12" fill="none"><g stroke="#177b8e" stroke-width="1.3" stroke-linecap="round" stroke-linejoin="round" fill="none"><path d="M3 7 Q6.5 2.8 10.5 7.3"/><path d="M1.2 4.6 L1.6 8.8 L5.6 7.6 Z" fill="#177b8e" stroke-width="0.6"/></g></svg>
<svg style="position:absolute;left:333.90px;top:159.50px;" width="11" height="11" viewBox="0 0 12 12" fill="none"><g stroke="#177b8e" stroke-width="1.3" stroke-linecap="round" stroke-linejoin="round" fill="none"><path d="M9 7 Q5.5 2.8 1.5 7.3"/><path d="M10.8 4.6 L10.4 8.8 L6.4 7.6 Z" fill="#177b8e" stroke-width="0.6"/></g></svg>
<svg style="position:absolute;left:358.20px;top:159.50px;" width="11" height="11" viewBox="0 0 12 12" fill="none"><g stroke="#177b8e" stroke-width="1.3" stroke-linecap="round" stroke-linejoin="round" fill="none"><path d="M1.5 3 H10.5 M1.5 6 H10.5 M1.5 9 H10.5 M7.5 1.8 V4.2 M4 4.8 V7.2 M7 7.8 V10.2"/></g></svg>
<svg style="position:absolute;left:382.30px;top:159.50px;" width="11" height="11" viewBox="0 0 12 12" fill="none"><g stroke="#177b8e" stroke-width="1.3" stroke-linecap="round" stroke-linejoin="round" fill="none"><path d="M3 2.5 L6 5.2 L9 2.5 M3 6.5 L6 9.2 L9 6.5"/></g></svg>
<svg style="position:absolute;left:406.50px;top:159.50px;" width="11" height="11" viewBox="0 0 12 12" fill="none"><g stroke="#177b8e" stroke-width="1.3" stroke-linecap="round" stroke-linejoin="round" fill="none"><path d="M3 5.5 L6 2.8 L9 5.5 M3 9.5 L6 6.8 L9 9.5"/></g></svg>
<svg style="position:absolute;left:431.00px;top:159.50px;" width="11" height="11" viewBox="0 0 12 12" fill="none"><g stroke="#177b8e" stroke-width="1.3" stroke-linecap="round" stroke-linejoin="round" fill="none"><path d="M3 7 V1.5 H7.5 L9.5 3.5 V10.5 H6 M2 10.5 L4.5 8 M2.5 8 H4.5 V10"/></g></svg>
<svg style="position:absolute;left:455.10px;top:159.50px;" width="11" height="11" viewBox="0 0 12 12" fill="none"><g stroke="#177b8e" stroke-width="1.3" stroke-linecap="round" stroke-linejoin="round" fill="none"><path d="M2.5 1.5 H7.5 L9.5 3.5 V10.5 H2.5 Z M6 9 V5.5 M4.5 7 L6 5.5 L7.5 7"/></g></svg>
<svg style="position:absolute;left:476.90px;top:160.00px;" width="10" height="10" viewBox="0 0 12 12" fill="none"><g stroke="#177b8e" stroke-width="1.4" stroke-linecap="round" stroke-linejoin="round" fill="none"><path d="M6 2 V10 M2 6 H10"/></g></svg>
<div class="t md" style="left:489.60px;top:161.00px;font-size:8.849794573853869px;line-height:8.849794573853869px;color:#177b8e;font-weight:400;letter-spacing:-0.000px;">New Task</div>
<div style="position:absolute;left:1113.30px;top:152.80px;width:281.50px;height:24.60px;background:#fff;border-radius:4px;box-shadow:0 0 2px rgba(0,0,0,.12)"></div>
<div style="position:absolute;left:1120.50px;top:156.30px;width:85.30px;height:17.80px;border:1.2px solid #177b8e;border-radius:3px"></div>
<div class="t md" style="left:1132.90px;top:161.00px;font-size:9.303107843490588px;line-height:9.303107843490588px;color:#177b8e;font-weight:400;letter-spacing:0.000px;">Current Period</div>
<div style="position:absolute;left:1212.40px;top:156.50px;width:79.00px;height:17.60px;border:1px solid #e6e8ea;border-radius:2px"></div>
<div class="t m" style="left:1218.60px;top:161.00px;font-size:9.3px;line-height:9.3px;color:#2b3037;font-weight:400;">Months</div>
<svg style="position:absolute;left:1275.00px;top:161.00px;" width="9" height="9" viewBox="0 0 12 12" fill="none"><g stroke="#3a3f46" stroke-width="1.2" stroke-linecap="round" stroke-linejoin="round" fill="none"><path d="M3 4.5 L6 7.5 L9 4.5"/></g></svg>
<svg style="position:absolute;left:1301.15px;top:159.75px;" width="10.5" height="10.5" viewBox="0 0 12 12" fill="none"><g stroke="#a9cdd5" stroke-width="1.1" stroke-linecap="round" stroke-linejoin="round" fill="none"><circle cx="5.2" cy="5.2" r="3.4"/><path d="M7.8 7.8 L10.5 10.5"/><path d="M5.2 3.8 V6.6 M3.8 5.2 H6.6"/></g></svg>
<svg style="position:absolute;left:1325.35px;top:159.75px;" width="10.5" height="10.5" viewBox="0 0 12 12" fill="none"><g stroke="#177b8e" stroke-width="1.3" stroke-linecap="round" stroke-linejoin="round" fill="none"><circle cx="5.2" cy="5.2" r="3.4"/><path d="M7.8 7.8 L10.5 10.5"/><path d="M3.8 5.2 H6.6"/></g></svg>
<svg style="position:absolute;left:1349.50px;top:159.50px;" width="11" height="11" viewBox="0 0 12 12" fill="none"><g stroke="#177b8e" stroke-width="1.2" stroke-linecap="round" stroke-linejoin="round" fill="none"><path d="M2 7.5 A4.3 4.3 0 1 1 5 10 M2 10.5 V7.5 H4.5"/><circle cx="7" cy="7" r="1.6"/><path d="M8.2 8.2 L10 10"/></g></svg>
<svg style="position:absolute;left:1374.60px;top:160.00px;" width="10" height="10" viewBox="0 0 12 12" fill="none"><g stroke="#177b8e" stroke-width="1.3" stroke-linecap="round" stroke-linejoin="round" fill="none"><path d="M1.5 4 V1.5 H4 M8 1.5 H10.5 V4 M10.5 8 V10.5 H8 M4 10.5 H1.5 V8"/></g></svg>
<div style="position:absolute;left:258.00px;top:183.70px;width:1136.80px;height:27.00px;background:#f0f6f7"></div>
<div class="t md" style="left:265.60px;top:194.00px;font-size:7.292098253921279px;line-height:7.292098253921279px;color:#177b8e;font-weight:400;letter-spacing:0.000px;">Start</div>
<svg style="position:absolute;left:288px;top:193px" width="100" height="8" viewBox="0 0 100 8"><path d="M1 4 H25" stroke="#177b8e" stroke-width="0.9" stroke-dasharray="1.1 1.6"/><circle cx="26" cy="4" r="2" fill="#177b8e"/><path d="M71 4 H94" stroke="#177b8e" stroke-width="0.9" stroke-dasharray="1.1 1.6"/><circle cx="95.3" cy="4" r="2" fill="#177b8e"/></svg>
<div class="t md" style="left:321.40px;top:195.00px;font-size:6.414084983917386px;line-height:6.414084983917386px;color:#177b8e;font-weight:400;letter-spacing:0.000px;">1 Jul 2025</div>
<div style="position:absolute;left:389.50px;top:190.90px;width:62.70px;height:12.20px;background:#177b8e;border-radius:2px"></div>
<div class="t md" style="left:394.30px;top:195.00px;font-size:6.136790981597825px;line-height:6.136790981597825px;color:#fff;font-weight:400;letter-spacing:0.000px;">Today, 23 Aug 2025</div>
<div class="t md" style="right:32.00px;text-align:right;top:195.00px;font-size:6.979685352069651px;line-height:6.979685352069651px;color:#177b8e;font-weight:400;letter-spacing:0.000px;">Day 53/243</div>
<div style="position:absolute;left:258.20px;top:222.10px;width:1136.60px;height:520.00px;background:#fff;border-radius:5px;box-shadow:0 0 2px rgba(0,0,0,.13)"></div>
<div style="position:absolute;left:281.40px;top:277.50px;width:544.40px;height:30.45px;background:#f6f6f6"></div>
<div style="position:absolute;left:281.40px;top:307.95px;width:544.40px;height:30.45px;background:#f6f6f6"></div>
<div style="position:absolute;left:663.50px;top:338.40px;width:162.30px;height:30.45px;background:#f6f6f6"></div>
<div style="position:absolute;left:663.50px;top:368.85px;width:162.30px;height:30.45px;background:#f6f6f6"></div>
<div style="position:absolute;left:663.50px;top:399.30px;width:162.30px;height:30.45px;background:#f6f6f6"></div>
<div style="position:absolute;left:263.50px;top:429.75px;width:1125.10px;height:30.45px;background:#e7eff2"></div>
<div style="position:absolute;left:281.40px;top:460.20px;width:544.40px;height:30.45px;background:#f6f6f6"></div>
<div style="position:absolute;left:663.50px;top:490.65px;width:162.30px;height:30.45px;background:#f6f6f6"></div>
<div style="position:absolute;left:663.50px;top:521.10px;width:162.30px;height:30.45px;background:#f6f6f6"></div>
<div style="position:absolute;left:663.50px;top:551.55px;width:162.30px;height:30.45px;background:#f6f6f6"></div>
<div style="position:absolute;left:663.50px;top:582.00px;width:162.30px;height:30.45px;background:#f6f6f6"></div>
<div style="position:absolute;left:281.40px;top:612.45px;width:544.40px;height:30.45px;background:#f6f6f6"></div>
<div style="position:absolute;left:663.50px;top:642.90px;width:162.30px;height:30.45px;background:#f6f6f6"></div>
<div style="position:absolute;left:663.50px;top:673.35px;width:162.30px;height:30.45px;background:#f6f6f6"></div>
<div style="position:absolute;left:663.50px;top:703.80px;width:162.30px;height:30.45px;background:#f6f6f6"></div>
<div style="position:absolute;left:263.50px;top:228.90px;width:1125.10px;height:1.00px;background:#e4e6e8"></div>
<div style="position:absolute;left:263.50px;top:277.00px;width:1125.10px;height:1.00px;background:#e4e6e8"></div>
<div style="position:absolute;left:263.50px;top:307.45px;width:562.30px;height:1.00px;background:#e4e6e8"></div>
<div style="position:absolute;left:263.50px;top:337.90px;width:562.30px;height:1.00px;background:#e4e6e8"></div>
<div style="position:absolute;left:263.50px;top:368.35px;width:562.30px;height:1.00px;background:#e4e6e8"></div>
<div style="position:absolute;left:263.50px;top:398.80px;width:562.30px;height:1.00px;background:#e4e6e8"></div>
<div style="position:absolute;left:263.50px;top:429.25px;width:562.30px;height:1.00px;background:#e4e6e8"></div>
<div style="position:absolute;left:263.50px;top:459.70px;width:562.30px;height:1.00px;background:#e4e6e8"></div>
<div style="position:absolute;left:263.50px;top:490.15px;width:562.30px;height:1.00px;background:#e4e6e8"></div>
<div style="position:absolute;left:263.50px;top:520.60px;width:562.30px;height:1.00px;background:#e4e6e8"></div>
<div style="position:absolute;left:263.50px;top:551.05px;width:562.30px;height:1.00px;background:#e4e6e8"></div>
<div style="position:absolute;left:263.50px;top:581.50px;width:562.30px;height:1.00px;background:#e4e6e8"></div>
<div style="position:absolute;left:263.50px;top:611.95px;width:562.30px;height:1.00px;background:#e4e6e8"></div>
<div style="position:absolute;left:263.50px;top:642.40px;width:562.30px;height:1.00px;background:#e4e6e8"></div>
<div style="position:absolute;left:263.50px;top:672.85px;width:562.30px;height:1.00px;background:#e4e6e8"></div>
<div style="position:absolute;left:263.50px;top:703.30px;width:562.30px;height:1.00px;background:#e4e6e8"></div>
<div style="position:absolute;left:263.50px;top:733.75px;width:562.30px;height:1.00px;background:#e4e6e8"></div>
<div style="position:absolute;left:263.00px;top:228.90px;width:1.00px;height:507.10px;background:#e4e6e8"></div>
<div style="position:absolute;left:280.90px;top:228.90px;width:1.00px;height:507.10px;background:#e4e6e8"></div>
<div style="position:absolute;left:469.50px;top:228.90px;width:1.00px;height:507.10px;background:#e4e6e8"></div>
<div style="position:absolute;left:518.80px;top:228.90px;width:1.00px;height:507.10px;background:#e4e6e8"></div>
<div style="position:absolute;left:579.30px;top:228.90px;width:1.00px;height:507.10px;background:#e4e6e8"></div>
<div style="position:absolute;left:621.10px;top:228.90px;width:1.00px;height:507.10px;background:#e4e6e8"></div>
<div style="position:absolute;left:663.00px;top:228.90px;width:1.00px;height:507.10px;background:#e4e6e8"></div>
<div style="position:absolute;left:712.30px;top:228.90px;width:1.00px;height:507.10px;background:#e4e6e8"></div>
<div style="position:absolute;left:750.20px;top:228.90px;width:1.00px;height:507.10px;background:#e4e6e8"></div>
<div style="position:absolute;left:825.30px;top:228.90px;width:1.00px;height:507.10px;background:#e4e6e8"></div>
<div style="position:absolute;left:1388.10px;top:228.90px;width:1.00px;height:507.10px;background:#e4e6e8"></div>
<svg style="position:absolute;left:267.00px;top:247.50px;" width="11" height="11" viewBox="0 0 12 12" fill="none"><g stroke="#177b8e" stroke-width="1.1" stroke-linecap="round" stroke-linejoin="round" fill="none"><rect x="1.5" y="3" width="9" height="6" rx="0.8"/><path d="M4.5 3 V9 M7.5 3 V9"/></g></svg>
<svg style="position:absolute;left:289.30px;top:248.50px;" width="9" height="9" viewBox="0 0 12 12" fill="none"><g stroke="#177b8e" stroke-width="1.6" stroke-linecap="round" stroke-linejoin="round" fill="none"><path d="M4.5 3 L7.5 6 L4.5 9"/></g></svg>
<div class="t m" style="left:306.00px;top:248.00px;font-size:9.5px;line-height:9.5px;color:#2b3037;font-weight:400;">Name</div>
<div class="t m" style="left:476.00px;top:242.00px;font-size:9.5px;line-height:9.5px;color:#2b3037;font-weight:400;letter-spacing:-0.525px;">Resour</div>
<div class="t m" style="left:476.00px;top:255.00px;font-size:9.5px;line-height:9.5px;color:#2b3037;font-weight:400;letter-spacing:-0.642px;">ces</div>
<div class="t m" style="right:845.70px;text-align:right;top:248.00px;font-size:9.5px;line-height:9.5px;color:#2b3037;font-weight:400;">Qty</div>
<div class="t m" style="right:803.90px;text-align:right;top:242.00px;font-size:9.5px;line-height:9.5px;color:#2b3037;font-weight:400;">Prod/</div>
<div class="t m" style="right:803.90px;text-align:right;top:255.00px;font-size:9.5px;line-height:9.5px;color:#2b3037;font-weight:400;">Hour</div>
<div class="t m" style="right:762.00px;text-align:right;top:242.00px;font-size:9.5px;line-height:9.5px;color:#2b3037;font-weight:400;">Prod/</div>
<div class="t m" style="right:762.00px;text-align:right;top:255.00px;font-size:9.5px;line-height:9.5px;color:#2b3037;font-weight:400;">Day</div>
<div class="t m" style="right:712.49px;text-align:right;top:248.00px;font-size:9.5px;line-height:9.5px;color:#2b3037;font-weight:400;letter-spacing:0.013px;">Duration</div>
<div class="t m" style="right:674.80px;text-align:right;top:242.00px;font-size:9.5px;line-height:9.5px;color:#2b3037;font-weight:400;">%</div>
<div class="t m" style="right:674.80px;text-align:right;top:255.00px;font-size:9.5px;line-height:9.5px;color:#2b3037;font-weight:400;">Done</div>
<div class="t m" style="right:599.00px;text-align:right;top:248.00px;font-size:9.5px;line-height:9.5px;color:#2b3037;font-weight:400;">Cost</div>
<svg style="position:absolute;left:289.30px;top:288.23px;" width="9" height="9" viewBox="0 0 12 12" fill="none"><g stroke="#177b8e" stroke-width="1.7" stroke-linecap="round" stroke-linejoin="round" fill="none"><path d="M3 4.5 L6 7.5 L9 4.5"/></g></svg>
<div class="t md" style="left:306.20px;top:289.00px;font-size:9.360826884121956px;line-height:9.360826884121956px;color:#2b3037;font-weight:400;letter-spacing:0.000px;">J1009 - Wallmart</div>
<div class="t sm" style="right:713.00px;text-align:right;top:289.00px;font-size:9.3px;line-height:9.3px;color:#3a3f46;font-weight:400;">577d</div>
<div class="t sm" style="right:674.80px;text-align:right;top:289.00px;font-size:9.3px;line-height:9.3px;color:#3a3f46;font-weight:400;">26%</div>
<div class="t sm" style="right:599.00px;text-align:right;top:289.00px;font-size:9.3px;line-height:9.3px;color:#3a3f46;font-weight:400;">$137,780.00</div>
<svg style="position:absolute;left:307.50px;top:318.68px;" width="9" height="9" viewBox="0 0 12 12" fill="none"><g stroke="#177b8e" stroke-width="1.7" stroke-linecap="round" stroke-linejoin="round" fill="none"><path d="M3 4.5 L6 7.5 L9 4.5"/></g></svg>
<div class="t md" style="left:324.30px;top:320.00px;font-size:8.956482842354143px;line-height:8.956482842354143px;color:#2b3037;font-weight:400;letter-spacing:0.000px;">Site Prep &amp; Formwork</div>
<div class="t sm" style="right:713.00px;text-align:right;top:320.00px;font-size:9.3px;line-height:9.3px;color:#3a3f46;font-weight:400;">153d</div>
<div class="t sm" style="right:674.80px;text-align:right;top:320.00px;font-size:9.3px;line-height:9.3px;color:#3a3f46;font-weight:400;">34%</div>
<div class="t sm" style="right:599.00px;text-align:right;top:320.00px;font-size:9.3px;line-height:9.3px;color:#3a3f46;font-weight:400;">$40,980.00</div>
<div class="t sm" style="left:324.40px;top:350.00px;font-size:9.05px;line-height:9.05px;color:#3a3f46;font-weight:400;">Excavation &amp; Grading</div>
<svg style="position:absolute;left:453.05px;top:348.88px;" width="9.5" height="9.5" viewBox="0 0 12 12" fill="none"><g stroke="#2a8ea0" stroke-width="1.35" stroke-linecap="round" stroke-linejoin="round" fill="none"><path d="M5 2 H2 V10 H10 V7 M7 2 H10 V5 M10 2 L5.5 6.5"/></g></svg>
<svg style="position:absolute;left:477.70px;top:349.12px;" width="9" height="9" viewBox="0 0 12 12" fill="none"><g stroke="#177b8e" stroke-width="1.2" stroke-linecap="round" stroke-linejoin="round" fill="none"><path d="M2 6 H10"/></g></svg>
<div class="t sm" style="left:344.60px;width:300px;text-align:center;top:350.00px;font-size:9.2px;line-height:9.2px;color:#3a3f46;font-weight:400;">1</div>
<svg style="position:absolute;left:502.70px;top:349.12px;" width="9" height="9" viewBox="0 0 12 12" fill="none"><g stroke="#177b8e" stroke-width="1.2" stroke-linecap="round" stroke-linejoin="round" fill="none"><path d="M6 2 V10 M2 6 H10"/></g></svg>
<div class="t sm" style="right:845.30px;text-align:right;top:350.00px;font-size:9.3px;line-height:9.3px;color:#3a3f46;font-weight:400;letter-spacing:0.105px;">3,200/LF</div>
<div class="t sm" style="right:803.80px;text-align:right;top:350.00px;font-size:9.3px;line-height:9.3px;color:#3a3f46;font-weight:400;">150</div>
<div class="t sm" style="right:762.00px;text-align:right;top:350.00px;font-size:9.3px;line-height:9.3px;color:#3a3f46;font-weight:400;">1,200</div>
<div class="t sm" style="right:713.00px;text-align:right;top:350.00px;font-size:9.3px;line-height:9.3px;color:#3a3f46;font-weight:400;">31d</div>
<div class="t sm" style="right:674.80px;text-align:right;top:350.00px;font-size:9.3px;line-height:9.3px;color:#3a3f46;font-weight:400;">100%</div>
<div class="t sm" style="right:599.00px;text-align:right;top:350.00px;font-size:9.3px;line-height:9.3px;color:#3a3f46;font-weight:400;">$6,000.00</div>
<div class="t sm" style="left:324.40px;top:380.00px;font-size:9.05px;line-height:9.05px;color:#3a3f46;font-weight:400;">Footing Layout</div>
<svg style="position:absolute;left:453.05px;top:379.32px;" width="9.5" height="9.5" viewBox="0 0 12 12" fill="none"><g stroke="#2a8ea0" stroke-width="1.35" stroke-linecap="round" stroke-linejoin="round" fill="none"><path d="M5 2 H2 V10 H10 V7 M7 2 H10 V5 M10 2 L5.5 6.5"/></g></svg>
<svg style="position:absolute;left:477.70px;top:379.57px;" width="9" height="9" viewBox="0 0 12 12" fill="none"><g stroke="#177b8e" stroke-width="1.2" stroke-linecap="round" stroke-linejoin="round" fill="none"><path d="M2 6 H10"/></g></svg>
<div class="t sm" style="left:344.60px;width:300px;text-align:center;top:380.00px;font-size:9.2px;line-height:9.2px;color:#3a3f46;font-weight:400;">1</div>
<svg style="position:absolute;left:502.70px;top:379.57px;" width="9" height="9" viewBox="0 0 12 12" fill="none"><g stroke="#177b8e" stroke-width="1.2" stroke-linecap="round" stroke-linejoin="round" fill="none"><path d="M6 2 V10 M2 6 H10"/></g></svg>
<div class="t sm" style="right:845.29px;text-align:right;top:380.00px;font-size:9.3px;line-height:9.3px;color:#3a3f46;font-weight:400;letter-spacing:0.108px;">3,200/SF</div>
<div class="t sm" style="right:803.80px;text-align:right;top:380.00px;font-size:9.3px;line-height:9.3px;color:#3a3f46;font-weight:400;">120</div>
<div class="t sm" style="right:762.00px;text-align:right;top:380.00px;font-size:9.3px;line-height:9.3px;color:#3a3f46;font-weight:400;">960</div>
<div class="t sm" style="right:713.00px;text-align:right;top:380.00px;font-size:9.3px;line-height:9.3px;color:#3a3f46;font-weight:400;">62d</div>
<div class="t sm" style="right:674.80px;text-align:right;top:380.00px;font-size:9.3px;line-height:9.3px;color:#3a3f46;font-weight:400;">72%</div>
<div class="t sm" style="right:599.00px;text-align:right;top:380.00px;font-size:9.3px;line-height:9.3px;color:#3a3f46;font-weight:400;">$6,340.00</div>
<div class="t sm" style="left:324.40px;top:411.00px;font-size:9.05px;line-height:9.05px;color:#3a3f46;font-weight:400;">Foundation Forming</div>
<svg style="position:absolute;left:453.05px;top:409.77px;" width="9.5" height="9.5" viewBox="0 0 12 12" fill="none"><g stroke="#2a8ea0" stroke-width="1.35" stroke-linecap="round" stroke-linejoin="round" fill="none"><path d="M5 2 H2 V10 H10 V7 M7 2 H10 V5 M10 2 L5.5 6.5"/></g></svg>
<svg style="position:absolute;left:477.70px;top:410.02px;" width="9" height="9" viewBox="0 0 12 12" fill="none"><g stroke="#177b8e" stroke-width="1.2" stroke-linecap="round" stroke-linejoin="round" fill="none"><path d="M2 6 H10"/></g></svg>
<div class="t sm" style="left:344.60px;width:300px;text-align:center;top:411.00px;font-size:9.2px;line-height:9.2px;color:#3a3f46;font-weight:400;">1</div>
<svg style="position:absolute;left:502.70px;top:410.02px;" width="9" height="9" viewBox="0 0 12 12" fill="none"><g stroke="#177b8e" stroke-width="1.2" stroke-linecap="round" stroke-linejoin="round" fill="none"><path d="M6 2 V10 M2 6 H10"/></g></svg>
<div class="t sm" style="right:845.29px;text-align:right;top:411.00px;font-size:9.3px;line-height:9.3px;color:#3a3f46;font-weight:400;letter-spacing:0.108px;">3,000/SF</div>
<div class="t sm" style="right:803.80px;text-align:right;top:411.00px;font-size:9.3px;line-height:9.3px;color:#3a3f46;font-weight:400;">100</div>
<div class="t sm" style="right:762.00px;text-align:right;top:411.00px;font-size:9.3px;line-height:9.3px;color:#3a3f46;font-weight:400;">800</div>
<div class="t sm" style="right:713.00px;text-align:right;top:411.00px;font-size:9.3px;line-height:9.3px;color:#3a3f46;font-weight:400;">30d</div>
<div class="t sm" style="right:674.80px;text-align:right;top:411.00px;font-size:9.3px;line-height:9.3px;color:#3a3f46;font-weight:400;">0%</div>
<div class="t sm" style="right:599.00px;text-align:right;top:411.00px;font-size:9.3px;line-height:9.3px;color:#3a3f46;font-weight:400;">$14,860.00</div>
<div class="t sm" style="left:324.40px;top:441.00px;font-size:9.05px;line-height:9.05px;color:#3a3f46;font-weight:400;">Slab Formwork</div>
<svg style="position:absolute;left:453.05px;top:440.23px;" width="9.5" height="9.5" viewBox="0 0 12 12" fill="none"><g stroke="#2a8ea0" stroke-width="1.35" stroke-linecap="round" stroke-linejoin="round" fill="none"><path d="M5 2 H2 V10 H10 V7 M7 2 H10 V5 M10 2 L5.5 6.5"/></g></svg>
<svg style="position:absolute;left:477.70px;top:440.48px;" width="9" height="9" viewBox="0 0 12 12" fill="none"><g stroke="#177b8e" stroke-width="1.2" stroke-linecap="round" stroke-linejoin="round" fill="none"><path d="M2 6 H10"/></g></svg>
<div class="t sm" style="left:344.60px;width:300px;text-align:center;top:441.00px;font-size:9.2px;line-height:9.2px;color:#3a3f46;font-weight:400;">1</div>
<svg style="position:absolute;left:502.70px;top:440.48px;" width="9" height="9" viewBox="0 0 12 12" fill="none"><g stroke="#177b8e" stroke-width="1.2" stroke-linecap="round" stroke-linejoin="round" fill="none"><path d="M6 2 V10 M2 6 H10"/></g></svg>
<div class="t sm" style="right:845.28px;text-align:right;top:441.00px;font-size:9.3px;line-height:9.3px;color:#3a3f46;font-weight:400;letter-spacing:0.120px;">900/SF</div>
<div class="t sm" style="right:803.80px;text-align:right;top:441.00px;font-size:9.3px;line-height:9.3px;color:#3a3f46;font-weight:400;">110</div>
<div class="t sm" style="right:762.00px;text-align:right;top:441.00px;font-size:9.3px;line-height:9.3px;color:#3a3f46;font-weight:400;">880</div>
<div style="position:absolute;left:270.80px;top:442.18px;width:1.20px;height:1.20px;background:#177b8e"></div>
<div style="position:absolute;left:273.00px;top:442.18px;width:1.20px;height:1.20px;background:#177b8e"></div>
<div style="position:absolute;left:270.80px;top:444.38px;width:1.20px;height:1.20px;background:#177b8e"></div>
<div style="position:absolute;left:273.00px;top:444.38px;width:1.20px;height:1.20px;background:#177b8e"></div>
<div style="position:absolute;left:270.80px;top:446.57px;width:1.20px;height:1.20px;background:#177b8e"></div>
<div style="position:absolute;left:273.00px;top:446.57px;width:1.20px;height:1.20px;background:#177b8e"></div>
<div class="t sm" style="right:713.00px;text-align:right;top:441.00px;font-size:9.3px;line-height:9.3px;color:#3a3f46;font-weight:400;">31d</div>
<div class="t sm" style="right:674.80px;text-align:right;top:441.00px;font-size:9.3px;line-height:9.3px;color:#3a3f46;font-weight:400;">0%</div>
<div class="t sm" style="right:599.00px;text-align:right;top:441.00px;font-size:9.3px;line-height:9.3px;color:#3a3f46;font-weight:400;">$7,200.00</div>
<svg style="position:absolute;left:307.50px;top:470.92px;" width="9" height="9" viewBox="0 0 12 12" fill="none"><g stroke="#177b8e" stroke-width="1.7" stroke-linecap="round" stroke-linejoin="round" fill="none"><path d="M3 4.5 L6 7.5 L9 4.5"/></g></svg>
<div class="t md" style="left:324.30px;top:472.00px;font-size:9.059843003884115px;line-height:9.059843003884115px;color:#2b3037;font-weight:400;letter-spacing:0.000px;">Placement &amp; Reinforcement</div>
<div class="t sm" style="right:713.00px;text-align:right;top:472.00px;font-size:9.3px;line-height:9.3px;color:#3a3f46;font-weight:400;">212d</div>
<div class="t sm" style="right:674.80px;text-align:right;top:472.00px;font-size:9.3px;line-height:9.3px;color:#3a3f46;font-weight:400;">22%</div>
<div class="t sm" style="right:599.00px;text-align:right;top:472.00px;font-size:9.3px;line-height:9.3px;color:#3a3f46;font-weight:400;">$48,400.00</div>
<div class="t sm" style="left:324.40px;top:502.00px;font-size:9.05px;line-height:9.05px;color:#3a3f46;font-weight:400;">Rebar Placement</div>
<svg style="position:absolute;left:453.05px;top:501.12px;" width="9.5" height="9.5" viewBox="0 0 12 12" fill="none"><g stroke="#2a8ea0" stroke-width="1.35" stroke-linecap="round" stroke-linejoin="round" fill="none"><path d="M5 2 H2 V10 H10 V7 M7 2 H10 V5 M10 2 L5.5 6.5"/></g></svg>
<svg style="position:absolute;left:477.70px;top:501.38px;" width="9" height="9" viewBox="0 0 12 12" fill="none"><g stroke="#177b8e" stroke-width="1.2" stroke-linecap="round" stroke-linejoin="round" fill="none"><path d="M2 6 H10"/></g></svg>
<div class="t sm" style="left:344.60px;width:300px;text-align:center;top:502.00px;font-size:9.2px;line-height:9.2px;color:#3a3f46;font-weight:400;">1</div>
<svg style="position:absolute;left:502.70px;top:501.38px;" width="9" height="9" viewBox="0 0 12 12" fill="none"><g stroke="#177b8e" stroke-width="1.2" stroke-linecap="round" stroke-linejoin="round" fill="none"><path d="M6 2 V10 M2 6 H10"/></g></svg>
<div class="t sm" style="right:845.30px;text-align:right;top:502.00px;font-size:9.3px;line-height:9.3px;color:#3a3f46;font-weight:400;letter-spacing:0.105px;">3,200/LF</div>
<div class="t sm" style="right:803.80px;text-align:right;top:502.00px;font-size:9.3px;line-height:9.3px;color:#3a3f46;font-weight:400;">150</div>
<div class="t sm" style="right:762.00px;text-align:right;top:502.00px;font-size:9.3px;line-height:9.3px;color:#3a3f46;font-weight:400;">1,200</div>
<div class="t sm" style="right:713.00px;text-align:right;top:502.00px;font-size:9.3px;line-height:9.3px;color:#3a3f46;font-weight:400;">31d</div>
<div class="t sm" style="right:674.80px;text-align:right;top:502.00px;font-size:9.3px;line-height:9.3px;color:#3a3f46;font-weight:400;">88%</div>
<div class="t sm" style="right:599.00px;text-align:right;top:502.00px;font-size:9.3px;line-height:9.3px;color:#3a3f46;font-weight:400;">$6,000.00</div>
<div class="t sm" style="left:324.40px;top:533.00px;font-size:9.05px;line-height:9.05px;color:#3a3f46;font-weight:400;">Post-Tension Cables</div>
<svg style="position:absolute;left:453.05px;top:531.58px;" width="9.5" height="9.5" viewBox="0 0 12 12" fill="none"><g stroke="#2a8ea0" stroke-width="1.35" stroke-linecap="round" stroke-linejoin="round" fill="none"><path d="M5 2 H2 V10 H10 V7 M7 2 H10 V5 M10 2 L5.5 6.5"/></g></svg>
<svg style="position:absolute;left:477.70px;top:531.83px;" width="9" height="9" viewBox="0 0 12 12" fill="none"><g stroke="#177b8e" stroke-width="1.2" stroke-linecap="round" stroke-linejoin="round" fill="none"><path d="M2 6 H10"/></g></svg>
<div class="t sm" style="left:344.60px;width:300px;text-align:center;top:533.00px;font-size:9.2px;line-height:9.2px;color:#3a3f46;font-weight:400;">1</div>
<svg style="position:absolute;left:502.70px;top:531.83px;" width="9" height="9" viewBox="0 0 12 12" fill="none"><g stroke="#177b8e" stroke-width="1.2" stroke-linecap="round" stroke-linejoin="round" fill="none"><path d="M6 2 V10 M2 6 H10"/></g></svg>
<div class="t sm" style="right:845.29px;text-align:right;top:533.00px;font-size:9.3px;line-height:9.3px;color:#3a3f46;font-weight:400;letter-spacing:0.108px;">3,200/SF</div>
<div class="t sm" style="right:803.80px;text-align:right;top:533.00px;font-size:9.3px;line-height:9.3px;color:#3a3f46;font-weight:400;">120</div>
<div class="t sm" style="right:762.00px;text-align:right;top:533.00px;font-size:9.3px;line-height:9.3px;color:#3a3f46;font-weight:400;">960</div>
<div class="t sm" style="right:713.00px;text-align:right;top:533.00px;font-size:9.3px;line-height:9.3px;color:#3a3f46;font-weight:400;">92d</div>
<div class="t sm" style="right:674.80px;text-align:right;top:533.00px;font-size:9.3px;line-height:9.3px;color:#3a3f46;font-weight:400;">20%</div>
<div class="t sm" style="right:599.00px;text-align:right;top:533.00px;font-size:9.3px;line-height:9.3px;color:#3a3f46;font-weight:400;">$18,400.00</div>
<div class="t sm" style="left:324.40px;top:563.00px;font-size:9.05px;line-height:9.05px;color:#3a3f46;font-weight:400;letter-spacing:-0.108px;">Concrete Pour (Footings / Sl...</div>
<svg style="position:absolute;left:453.05px;top:562.02px;" width="9.5" height="9.5" viewBox="0 0 12 12" fill="none"><g stroke="#2a8ea0" stroke-width="1.35" stroke-linecap="round" stroke-linejoin="round" fill="none"><path d="M5 2 H2 V10 H10 V7 M7 2 H10 V5 M10 2 L5.5 6.5"/></g></svg>
<svg style="position:absolute;left:477.70px;top:562.27px;" width="9" height="9" viewBox="0 0 12 12" fill="none"><g stroke="#177b8e" stroke-width="1.2" stroke-linecap="round" stroke-linejoin="round" fill="none"><path d="M2 6 H10"/></g></svg>
<div class="t sm" style="left:344.60px;width:300px;text-align:center;top:563.00px;font-size:9.2px;line-height:9.2px;color:#3a3f46;font-weight:400;">1</div>
<svg style="position:absolute;left:502.70px;top:562.27px;" width="9" height="9" viewBox="0 0 12 12" fill="none"><g stroke="#177b8e" stroke-width="1.2" stroke-linecap="round" stroke-linejoin="round" fill="none"><path d="M6 2 V10 M2 6 H10"/></g></svg>
<div class="t sm" style="right:845.29px;text-align:right;top:563.00px;font-size:9.3px;line-height:9.3px;color:#3a3f46;font-weight:400;letter-spacing:0.108px;">3,000/SF</div>
<div class="t sm" style="right:803.80px;text-align:right;top:563.00px;font-size:9.3px;line-height:9.3px;color:#3a3f46;font-weight:400;">110</div>
<div class="t sm" style="right:762.00px;text-align:right;top:563.00px;font-size:9.3px;line-height:9.3px;color:#3a3f46;font-weight:400;">800</div>
<div class="t sm" style="right:713.00px;text-align:right;top:563.00px;font-size:9.3px;line-height:9.3px;color:#3a3f46;font-weight:400;">30d</div>
<div class="t sm" style="right:674.80px;text-align:right;top:563.00px;font-size:9.3px;line-height:9.3px;color:#3a3f46;font-weight:400;">0%</div>
<div class="t sm" style="right:599.00px;text-align:right;top:563.00px;font-size:9.3px;line-height:9.3px;color:#3a3f46;font-weight:400;">$6,000.00</div>
<div class="t sm" style="left:324.40px;top:594.00px;font-size:9.05px;line-height:9.05px;color:#3a3f46;font-weight:400;">Vibrating &amp; Consolidation</div>
<svg style="position:absolute;left:453.05px;top:592.47px;" width="9.5" height="9.5" viewBox="0 0 12 12" fill="none"><g stroke="#2a8ea0" stroke-width="1.35" stroke-linecap="round" stroke-linejoin="round" fill="none"><path d="M5 2 H2 V10 H10 V7 M7 2 H10 V5 M10 2 L5.5 6.5"/></g></svg>
<svg style="position:absolute;left:477.70px;top:592.72px;" width="9" height="9" viewBox="0 0 12 12" fill="none"><g stroke="#177b8e" stroke-width="1.2" stroke-linecap="round" stroke-linejoin="round" fill="none"><path d="M2 6 H10"/></g></svg>
<div class="t sm" style="left:344.60px;width:300px;text-align:center;top:594.00px;font-size:9.2px;line-height:9.2px;color:#3a3f46;font-weight:400;">1</div>
<svg style="position:absolute;left:502.70px;top:592.72px;" width="9" height="9" viewBox="0 0 12 12" fill="none"><g stroke="#177b8e" stroke-width="1.2" stroke-linecap="round" stroke-linejoin="round" fill="none"><path d="M6 2 V10 M2 6 H10"/></g></svg>
<div class="t sm" style="right:845.28px;text-align:right;top:594.00px;font-size:9.3px;line-height:9.3px;color:#3a3f46;font-weight:400;letter-spacing:0.120px;">900/SF</div>
<div class="t sm" style="right:803.80px;text-align:right;top:594.00px;font-size:9.3px;line-height:9.3px;color:#3a3f46;font-weight:400;">100</div>
<div class="t sm" style="right:762.00px;text-align:right;top:594.00px;font-size:9.3px;line-height:9.3px;color:#3a3f46;font-weight:400;">880</div>
<div class="t sm" style="right:713.00px;text-align:right;top:594.00px;font-size:9.3px;line-height:9.3px;color:#3a3f46;font-weight:400;">62d</div>
<div class="t sm" style="right:674.80px;text-align:right;top:594.00px;font-size:9.3px;line-height:9.3px;color:#3a3f46;font-weight:400;">0%</div>
<div class="t sm" style="right:599.00px;text-align:right;top:594.00px;font-size:9.3px;line-height:9.3px;color:#3a3f46;font-weight:400;">$12,400.00</div>
<svg style="position:absolute;left:307.50px;top:623.17px;" width="9" height="9" viewBox="0 0 12 12" fill="none"><g stroke="#177b8e" stroke-width="1.7" stroke-linecap="round" stroke-linejoin="round" fill="none"><path d="M3 4.5 L6 7.5 L9 4.5"/></g></svg>
<div class="t md" style="left:324.30px;top:624.00px;font-size:8.824209972749438px;line-height:8.824209972749438px;color:#2b3037;font-weight:400;letter-spacing:0.000px;">Finishing &amp; Curing</div>
<div class="t sm" style="right:713.00px;text-align:right;top:624.00px;font-size:9.3px;line-height:9.3px;color:#3a3f46;font-weight:400;">212d</div>
<div class="t sm" style="right:674.80px;text-align:right;top:624.00px;font-size:9.3px;line-height:9.3px;color:#3a3f46;font-weight:400;">22%</div>
<div class="t sm" style="right:599.00px;text-align:right;top:624.00px;font-size:9.3px;line-height:9.3px;color:#3a3f46;font-weight:400;">$48,400.00</div>
<div class="t sm" style="left:324.40px;top:655.00px;font-size:9.05px;line-height:9.05px;color:#3a3f46;font-weight:400;letter-spacing:-0.039px;">Surface Finishing (trowel, br...</div>
<svg style="position:absolute;left:453.05px;top:653.38px;" width="9.5" height="9.5" viewBox="0 0 12 12" fill="none"><g stroke="#2a8ea0" stroke-width="1.35" stroke-linecap="round" stroke-linejoin="round" fill="none"><path d="M5 2 H2 V10 H10 V7 M7 2 H10 V5 M10 2 L5.5 6.5"/></g></svg>
<svg style="position:absolute;left:477.70px;top:653.62px;" width="9" height="9" viewBox="0 0 12 12" fill="none"><g stroke="#177b8e" stroke-width="1.2" stroke-linecap="round" stroke-linejoin="round" fill="none"><path d="M2 6 H10"/></g></svg>
<div class="t sm" style="left:344.60px;width:300px;text-align:center;top:655.00px;font-size:9.2px;line-height:9.2px;color:#3a3f46;font-weight:400;">1</div>
<svg style="position:absolute;left:502.70px;top:653.62px;" width="9" height="9" viewBox="0 0 12 12" fill="none"><g stroke="#177b8e" stroke-width="1.2" stroke-linecap="round" stroke-linejoin="round" fill="none"><path d="M6 2 V10 M2 6 H10"/></g></svg>
<div class="t sm" style="right:845.30px;text-align:right;top:655.00px;font-size:9.3px;line-height:9.3px;color:#3a3f46;font-weight:400;letter-spacing:0.105px;">3,200/LF</div>
<div class="t sm" style="right:803.80px;text-align:right;top:655.00px;font-size:9.3px;line-height:9.3px;color:#3a3f46;font-weight:400;">150</div>
<div class="t sm" style="right:762.00px;text-align:right;top:655.00px;font-size:9.3px;line-height:9.3px;color:#3a3f46;font-weight:400;">1,200</div>
<div class="t sm" style="right:713.00px;text-align:right;top:655.00px;font-size:9.3px;line-height:9.3px;color:#3a3f46;font-weight:400;">31d</div>
<div class="t sm" style="right:674.80px;text-align:right;top:655.00px;font-size:9.3px;line-height:9.3px;color:#3a3f46;font-weight:400;">88%</div>
<div class="t sm" style="right:599.00px;text-align:right;top:655.00px;font-size:9.3px;line-height:9.3px;color:#3a3f46;font-weight:400;">$6,000.00</div>
<div class="t sm" style="left:324.40px;top:685.00px;font-size:9.05px;line-height:9.05px;color:#3a3f46;font-weight:400;">Expansion Joint Cutting</div>
<svg style="position:absolute;left:453.05px;top:683.83px;" width="9.5" height="9.5" viewBox="0 0 12 12" fill="none"><g stroke="#2a8ea0" stroke-width="1.35" stroke-linecap="round" stroke-linejoin="round" fill="none"><path d="M5 2 H2 V10 H10 V7 M7 2 H10 V5 M10 2 L5.5 6.5"/></g></svg>
<svg style="position:absolute;left:477.70px;top:684.08px;" width="9" height="9" viewBox="0 0 12 12" fill="none"><g stroke="#177b8e" stroke-width="1.2" stroke-linecap="round" stroke-linejoin="round" fill="none"><path d="M2 6 H10"/></g></svg>
<div class="t sm" style="left:344.60px;width:300px;text-align:center;top:685.00px;font-size:9.2px;line-height:9.2px;color:#3a3f46;font-weight:400;">1</div>
<svg style="position:absolute;left:502.70px;top:684.08px;" width="9" height="9" viewBox="0 0 12 12" fill="none"><g stroke="#177b8e" stroke-width="1.2" stroke-linecap="round" stroke-linejoin="round" fill="none"><path d="M6 2 V10 M2 6 H10"/></g></svg>
<div class="t sm" style="right:845.29px;text-align:right;top:685.00px;font-size:9.3px;line-height:9.3px;color:#3a3f46;font-weight:400;letter-spacing:0.108px;">3,200/SF</div>
<div class="t sm" style="right:803.80px;text-align:right;top:685.00px;font-size:9.3px;line-height:9.3px;color:#3a3f46;font-weight:400;">120</div>
<div class="t sm" style="right:762.00px;text-align:right;top:685.00px;font-size:9.3px;line-height:9.3px;color:#3a3f46;font-weight:400;">960</div>
<div class="t sm" style="right:713.00px;text-align:right;top:685.00px;font-size:9.3px;line-height:9.3px;color:#3a3f46;font-weight:400;">92d</div>
<div class="t sm" style="right:674.80px;text-align:right;top:685.00px;font-size:9.3px;line-height:9.3px;color:#3a3f46;font-weight:400;">20%</div>
<div class="t sm" style="right:599.00px;text-align:right;top:685.00px;font-size:9.3px;line-height:9.3px;color:#3a3f46;font-weight:400;">$18,400.00</div>
<div class="t sm" style="left:324.40px;top:715.00px;font-size:9.05px;line-height:9.05px;color:#3a3f46;font-weight:400;">Curing &amp; Protection</div>
<svg style="position:absolute;left:453.05px;top:714.27px;" width="9.5" height="9.5" viewBox="0 0 12 12" fill="none"><g stroke="#2a8ea0" stroke-width="1.35" stroke-linecap="round" stroke-linejoin="round" fill="none"><path d="M5 2 H2 V10 H10 V7 M7 2 H10 V5 M10 2 L5.5 6.5"/></g></svg>
<svg style="position:absolute;left:477.70px;top:714.52px;" width="9" height="9" viewBox="0 0 12 12" fill="none"><g stroke="#177b8e" stroke-width="1.2" stroke-linecap="round" stroke-linejoin="round" fill="none"><path d="M2 6 H10"/></g></svg>
<div class="t sm" style="left:344.60px;width:300px;text-align:center;top:715.00px;font-size:9.2px;line-height:9.2px;color:#3a3f46;font-weight:400;">1</div>
<svg style="position:absolute;left:502.70px;top:714.52px;" width="9" height="9" viewBox="0 0 12 12" fill="none"><g stroke="#177b8e" stroke-width="1.2" stroke-linecap="round" stroke-linejoin="round" fill="none"><path d="M6 2 V10 M2 6 H10"/></g></svg>
<div class="t sm" style="right:845.29px;text-align:right;top:715.00px;font-size:9.3px;line-height:9.3px;color:#3a3f46;font-weight:400;letter-spacing:0.108px;">3,000/SF</div>
<div class="t sm" style="right:803.80px;text-align:right;top:715.00px;font-size:9.3px;line-height:9.3px;color:#3a3f46;font-weight:400;">110</div>
<div class="t sm" style="right:762.00px;text-align:right;top:715.00px;font-size:9.3px;line-height:9.3px;color:#3a3f46;font-weight:400;">800</div>
<div class="t sm" style="right:713.00px;text-align:right;top:715.00px;font-size:9.3px;line-height:9.3px;color:#3a3f46;font-weight:400;">30d</div>
<div class="t sm" style="right:674.80px;text-align:right;top:715.00px;font-size:9.3px;line-height:9.3px;color:#3a3f46;font-weight:400;">0%</div>
<div class="t sm" style="right:599.00px;text-align:right;top:715.00px;font-size:9.3px;line-height:9.3px;color:#3a3f46;font-weight:400;">$6,000.00</div>
<div style="position:absolute;left:825.80px;top:253.20px;width:562.80px;height:1.00px;background:#e4e6e8"></div>
<div style="position:absolute;left:896.10px;top:253.50px;width:1.00px;height:24.00px;background:#e4e6e8"></div>
<div style="position:absolute;left:896.10px;top:277.50px;width:1.00px;height:458.50px;background:#f3f4f4"></div>
<div style="position:absolute;left:966.40px;top:253.50px;width:1.00px;height:24.00px;background:#e4e6e8"></div>
<div style="position:absolute;left:966.40px;top:277.50px;width:1.00px;height:458.50px;background:#f3f4f4"></div>
<div style="position:absolute;left:1036.70px;top:253.50px;width:1.00px;height:24.00px;background:#e4e6e8"></div>
<div style="position:absolute;left:1036.70px;top:277.50px;width:1.00px;height:458.50px;background:#f3f4f4"></div>
<div style="position:absolute;left:1107.00px;top:253.50px;width:1.00px;height:24.00px;background:#e4e6e8"></div>
<div style="position:absolute;left:1107.00px;top:277.50px;width:1.00px;height:458.50px;background:#f3f4f4"></div>
<div style="position:absolute;left:1177.30px;top:253.50px;width:1.00px;height:24.00px;background:#e4e6e8"></div>
<div style="position:absolute;left:1177.30px;top:277.50px;width:1.00px;height:458.50px;background:#f3f4f4"></div>
<div style="position:absolute;left:1247.60px;top:253.50px;width:1.00px;height:24.00px;background:#e4e6e8"></div>
<div style="position:absolute;left:1247.60px;top:277.50px;width:1.00px;height:458.50px;background:#f3f4f4"></div>
<div style="position:absolute;left:1317.90px;top:228.90px;width:1.00px;height:48.60px;background:#e4e6e8"></div>
<div style="position:absolute;left:1317.90px;top:277.50px;width:1.00px;height:458.50px;background:#f3f4f4"></div>
<div class="t m" style="left:832.30px;top:237.00px;font-size:9.5px;line-height:9.5px;color:#2b3037;font-weight:400;">2025</div>
<div class="t m" style="left:1324.50px;top:237.00px;font-size:9.5px;line-height:9.5px;color:#2b3037;font-weight:400;">2026</div>
<div class="t m" style="left:832.70px;top:261.00px;font-size:9.5px;line-height:9.5px;color:#2b3037;font-weight:400;">Jun</div>
<div class="t m" style="left:903.00px;top:261.00px;font-size:9.5px;line-height:9.5px;color:#2b3037;font-weight:400;">Jul</div>
<div class="t m" style="left:973.30px;top:261.00px;font-size:9.5px;line-height:9.5px;color:#2b3037;font-weight:400;">Aug</div>
<div class="t m" style="left:1043.60px;top:261.00px;font-size:9.5px;line-height:9.5px;color:#2b3037;font-weight:400;">Sep</div>
<div class="t m" style="left:1113.90px;top:261.00px;font-size:9.5px;line-height:9.5px;color:#2b3037;font-weight:400;">Oct</div>
<div class="t m" style="left:1184.20px;top:261.00px;font-size:9.5px;line-height:9.5px;color:#2b3037;font-weight:400;">Nov</div>
<div class="t m" style="left:1254.50px;top:261.00px;font-size:9.5px;line-height:9.5px;color:#2b3037;font-weight:400;">Dec</div>
<div class="t m" style="left:1324.80px;top:261.00px;font-size:9.5px;line-height:9.5px;color:#2b3037;font-weight:400;">Jan</div>
<svg style="position:absolute;left:825.8px;top:277.5px" width="562.8" height="458.5" viewBox="0 0 562.8 458.5" fill="none"><path d="M71.20 76.12 L62.80 76.12 L62.80 106.57 L69.70 106.57" stroke="#a9adb1" stroke-width="1" fill="none"/><path d="M66.20000000000005 104.27499999999999 L69.70000000000005 106.57499999999999 L66.20000000000005 108.87499999999999 Z" fill="#a9adb1"/><path d="M211.20 106.57 L218.20 106.57 L218.20 122.07 L203.70 122.07 L203.70 137.02 L210.70 137.02" stroke="#a9adb1" stroke-width="1" fill="none"/><path d="M207.20000000000005 134.72499999999997 L210.70000000000005 137.02499999999998 L207.20000000000005 139.325 Z" fill="#a9adb1"/><path d="M282.20 137.02 L288.20 137.02 L288.20 152.52 L273.70 152.52 L273.70 167.48 L280.70 167.48" stroke="#a9adb1" stroke-width="1" fill="none"/><path d="M277.20000000000005 165.175 L280.70000000000005 167.47500000000002 L277.20000000000005 169.77500000000003 Z" fill="#a9adb1"/><path d="M141.20 228.38 L134.20 228.38 L134.20 258.83 L140.20 258.83" stroke="#a9adb1" stroke-width="1" fill="none"/><path d="M136.70000000000005 256.52500000000003 L140.20000000000005 258.82500000000005 L136.70000000000005 261.12500000000006 Z" fill="#a9adb1"/><path d="M352.20 258.83 L357.70 258.83 L357.70 274.33 L342.70 274.33 L342.70 289.27 L350.70 289.27" stroke="#a9adb1" stroke-width="1" fill="none"/><path d="M347.20000000000005 286.97499999999997 L350.70000000000005 289.275 L347.20000000000005 291.575 Z" fill="#a9adb1"/><path d="M141.20 380.62 L134.20 380.62 L134.20 411.08 L140.20 411.08" stroke="#a9adb1" stroke-width="1" fill="none"/><path d="M136.70000000000005 408.77500000000003 L140.20000000000005 411.07500000000005 L136.70000000000005 413.37500000000006 Z" fill="#a9adb1"/><path d="M352.20 411.08 L357.70 411.08 L357.70 426.58 L342.70 426.58 L342.70 441.52 L350.70 441.52" stroke="#a9adb1" stroke-width="1" fill="none"/><path d="M347.20000000000005 439.22499999999997 L350.70000000000005 441.525 L347.20000000000005 443.825 Z" fill="#a9adb1"/><path d="M422.20 289.27 L428.20 289.27 L428.20 304.77 L413.20 304.77 L413.20 319.72 L420.70 319.72" stroke="#a9adb1" stroke-width="1" fill="none"/><path d="M417.20000000000005 317.4249999999999 L420.70000000000005 319.7249999999999 L417.20000000000005 322.0249999999999 Z" fill="#a9adb1"/><path d="M422.20 441.52 L428.20 441.52 L428.20 462.50" stroke="#a9adb1" stroke-width="1" fill="none"/><path d="M71.40000000000009 8.425000000000011 H562.8 V19.025000000000034 H76.90000000000009 L73.40000000000009 21.025000000000034 Q72.20000000000009 21.625000000000036 71.40000000000009 21.325000000000035 Z" fill="#5ea3b2" stroke="#3a8b9b" stroke-width="1"/><path d="M71.40000000000009 38.875 H423.20000000000005 V49.47500000000002 H76.90000000000009 L73.40000000000009 51.47500000000002 Q72.20000000000009 52.075000000000024 71.40000000000009 51.77500000000002 Z" fill="#5ea3b2" stroke="#3a8b9b" stroke-width="1"/><rect x="71.70000000000005" y="69.22500000000002" width="69.5" height="13.8" rx="3" fill="#7ecf86" stroke="#3daf48" stroke-width="1.2"/><rect x="71.70000000000005" y="99.67500000000001" width="139.20000000000005" height="13.8" rx="3" fill="#b8d8df"/><path d="M74.70000000000005 99.67500000000001 H135.20000000000005 V113.47500000000001 H74.70000000000005 Q71.70000000000005 113.47500000000001 71.70000000000005 110.47500000000001 V102.67500000000001 Q71.70000000000005 99.67500000000001 74.70000000000005 99.67500000000001 Z" fill="#8bbac6"/><rect x="71.70000000000005" y="99.67500000000001" width="139.20000000000005" height="13.8" rx="3" fill="none" stroke="#4a9bac" stroke-width="1.1"/><rect x="211.70000000000005" y="130.125" width="69.79999999999995" height="13.8" rx="3" fill="#c8c9cc" stroke="#76797d" stroke-width="1.1"/><rect x="282.5" y="160.57500000000005" width="69.20000000000005" height="13.8" rx="3" fill="#b2b5b8" stroke="#85888c" stroke-width="1.1"/><path d="M141.4000000000001 191.12499999999994 H562.8 V201.72499999999997 H146.9000000000001 L143.4000000000001 203.72499999999997 Q142.2000000000001 204.32499999999996 141.4000000000001 204.02499999999998 Z" fill="#5ea3b2" stroke="#3a8b9b" stroke-width="1"/><rect x="141.70000000000005" y="221.47500000000002" width="69.20000000000005" height="13.8" rx="3" fill="#b8d8df"/><path d="M144.70000000000005 221.47500000000002 H181.20000000000005 V235.27500000000003 H144.70000000000005 Q141.70000000000005 235.27500000000003 141.70000000000005 232.27500000000003 V224.47500000000002 Q141.70000000000005 221.47500000000002 144.70000000000005 221.47500000000002 Z" fill="#8bbac6"/><rect x="141.70000000000005" y="221.47500000000002" width="69.20000000000005" height="13.8" rx="3" fill="none" stroke="#4a9bac" stroke-width="1.1"/><rect x="141.70000000000005" y="251.92500000000007" width="210.0" height="13.8" rx="3" fill="#b8d8df"/><path d="M144.70000000000005 251.92500000000007 H150.20000000000005 V265.7250000000001 H144.70000000000005 Q141.70000000000005 265.7250000000001 141.70000000000005 262.7250000000001 V254.92500000000007 Q141.70000000000005 251.92500000000007 144.70000000000005 251.92500000000007 Z" fill="#8bbac6"/><rect x="141.70000000000005" y="251.92500000000007" width="210.0" height="13.8" rx="3" fill="none" stroke="#4a9bac" stroke-width="1.1"/><rect x="352.70000000000005" y="282.375" width="69.5" height="13.8" rx="3" fill="#c8c9cc" stroke="#76797d" stroke-width="1.1"/><rect x="422.70000000000005" y="312.82499999999993" width="139.0" height="13.8" rx="3" fill="#c8c9cc" stroke="#76797d" stroke-width="1.1"/><path d="M141.4000000000001 343.375 H562.8 V353.9749999999999 H146.9000000000001 L143.4000000000001 355.9749999999999 Q142.2000000000001 356.57499999999993 141.4000000000001 356.2749999999999 Z" fill="#5ea3b2" stroke="#3a8b9b" stroke-width="1"/><rect x="141.70000000000005" y="373.725" width="69.20000000000005" height="13.8" rx="3" fill="#b8d8df"/><path d="M144.70000000000005 373.725 H181.20000000000005 V387.52500000000003 H144.70000000000005 Q141.70000000000005 387.52500000000003 141.70000000000005 384.52500000000003 V376.725 Q141.70000000000005 373.725 144.70000000000005 373.725 Z" fill="#8bbac6"/><rect x="141.70000000000005" y="373.725" width="69.20000000000005" height="13.8" rx="3" fill="none" stroke="#4a9bac" stroke-width="1.1"/><rect x="141.70000000000005" y="404.17500000000007" width="210.0" height="13.8" rx="3" fill="#b8d8df"/><path d="M144.70000000000005 404.17500000000007 H150.20000000000005 V417.9750000000001 H144.70000000000005 Q141.70000000000005 417.9750000000001 141.70000000000005 414.9750000000001 V407.17500000000007 Q141.70000000000005 404.17500000000007 144.70000000000005 404.17500000000007 Z" fill="#8bbac6"/><rect x="141.70000000000005" y="404.17500000000007" width="210.0" height="13.8" rx="3" fill="none" stroke="#4a9bac" stroke-width="1.1"/><rect x="352.70000000000005" y="434.625" width="69.5" height="13.8" rx="3" fill="#c8c9cc" stroke="#76797d" stroke-width="1.1"/><path d="M289.20000000000005 164.47500000000002 L286.50000000000006 167.47500000000002 L289.20000000000005 170.47500000000002" stroke="#177b8e" stroke-width="1.2" fill="none"/><path d="M344.70000000000005 164.47500000000002 L347.40000000000003 167.47500000000002 L344.70000000000005 170.47500000000002" stroke="#177b8e" stroke-width="1.2" fill="none"/><circle cx="270.9000000000001" cy="167.47500000000002" r="4.6" fill="#fff" stroke="#177b8e" stroke-width="1.1"/><path d="M268.5000000000001 167.47500000000002 H273.30000000000007 M270.9000000000001 165.07500000000002 V169.87500000000003" stroke="#177b8e" stroke-width="1.1"/><circle cx="363.0" cy="167.47500000000002" r="4.6" fill="#fff" stroke="#177b8e" stroke-width="1.1"/><path d="M360.6 167.47500000000002 H365.4 M363.0 165.07500000000002 V169.87500000000003" stroke="#177b8e" stroke-width="1.1"/><path d="M278.0 179.10000000000002 L281.9000000000001 172.5 L285.79999999999995 179.10000000000002 Z" fill="#177b8e"/><path d="M326.49 174.13 L323.01 173.20" stroke="#2a5cff" stroke-width="1.3" stroke-linecap="round"/><path d="M327.51 172.67 L325.44 169.72" stroke="#2a5cff" stroke-width="1.3" stroke-linecap="round"/><path d="M329.00 172.20 L329.00 168.60" stroke="#2a5cff" stroke-width="1.3" stroke-linecap="round"/><path d="M330.49 172.67 L332.56 169.72" stroke="#2a5cff" stroke-width="1.3" stroke-linecap="round"/><path d="M331.51 174.13 L334.99 173.20" stroke="#2a5cff" stroke-width="1.3" stroke-linecap="round"/><g transform="translate(326.50 172.30) scale(1.3)"><path d="M0 0 V6 L-1.5 4.8 Q-3 5 -2 6.8 L0.5 10.5 H6 L7 7 V4.5 Q6 3.6 5 4.5 Q4 3 3 4 Q2 3 1.6 3.8 V0 Q0.8 -1.2 0 0 Z" fill="#fff" stroke="#222" stroke-width="0.7"/><path d="M2.5 6.5 V8.5 M4 6.5 V8.5" stroke="#222" stroke-width="0.5"/></g><rect x="140.60" y="0" width="1" height="458.5" fill="rgba(0,0,0,0.06)"/><rect x="210.90" y="0" width="1" height="458.5" fill="rgba(0,0,0,0.06)"/><rect x="281.20" y="0" width="1" height="458.5" fill="rgba(0,0,0,0.06)"/><rect x="351.50" y="0" width="1" height="458.5" fill="rgba(0,0,0,0.06)"/><rect x="421.80" y="0" width="1" height="458.5" fill="rgba(0,0,0,0.06)"/><rect x="492.10" y="0" width="1" height="458.5" fill="rgba(0,0,0,0.06)"/></svg>
<div style="position:absolute;left:895.00px;top:217.50px;width:2.00px;height:520.00px;background:#0a30a8"></div>
<div style="position:absolute;left:895.00px;top:217.50px;width:45.50px;height:12.30px;background:#0a30a8"></div>
<div class="t md" style="left:898.50px;top:222.00px;font-size:7.088190608715408px;line-height:7.088190608715408px;color:#fff;font-weight:400;letter-spacing:0.000px;">Project Start</div>
<div class="t m" style="left:973.80px;top:349.00px;font-size:10.5px;line-height:10.5px;color:#3a3f46;font-weight:400;">Excavation &amp; Grading</div>
<div class="t m" style="left:1043.30px;top:380.00px;font-size:10.5px;line-height:10.5px;color:#3a3f46;font-weight:400;">Footing Layout</div>
<div class="t m" style="left:1113.80px;top:410.00px;font-size:10.5px;line-height:10.5px;color:#3a3f46;font-weight:400;">Foundation Forming</div>
<div class="t m" style="left:1043.30px;top:501.00px;font-size:10.5px;line-height:10.5px;color:#3a3f46;font-weight:400;">Rebar Placement</div>
<div class="t m" style="left:1184.60px;top:532.00px;font-size:10.5px;line-height:10.5px;color:#3a3f46;font-weight:400;">Post-Tension Cables</div>
<div style="position:absolute;left:1255.2px;top:556.775px;width:132.89999999999986px;height:20px;overflow:hidden">
<div class="t m" style="left:0.00px;top:6.00px;font-size:10.5px;line-height:10.5px;color:#3a3f46;font-weight:400;">Concrete Pour (Footings / Slab)</div>
</div>
<div class="t m" style="left:1043.30px;top:654.00px;font-size:10.5px;line-height:10.5px;color:#3a3f46;font-weight:400;">Surface Finishing (trowel, broom, polish)</div>
<div class="t m" style="left:1184.60px;top:684.00px;font-size:10.5px;line-height:10.5px;color:#3a3f46;font-weight:400;">Expansion Joint Cutting</div>
<div class="t m" style="left:1255.20px;top:715.00px;font-size:10.5px;line-height:10.5px;color:#3a3f46;font-weight:400;">Curing &amp; Protection</div>
<div class="t m" style="left:1202.90px;top:440.00px;font-size:10.5px;line-height:10.5px;color:#3a3f46;font-weight:400;">Document best practices for risk</div>
<div class="t m" style="left:1251.00px;top:319.00px;font-size:10.5px;line-height:10.5px;color:#3a3f46;font-weight:400;">Site Prep &amp; Formwork</div>
<div style="position:absolute;left:1142.40px;top:310.70px;width:151.60px;height:125.20px;background:#fff;border-radius:5px;box-shadow:0 1px 4px rgba(0,0,0,.16)"></div>
<svg style="position:absolute;left:1140px;top:434px" width="8" height="5" viewBox="0 0 8 5"><path d="M2.4 0 H6.5 L4 4 Z" fill="#fff"/></svg>
<div class="t md" style="left:1148.60px;top:319.00px;font-size:10.631455649025662px;line-height:10.631455649025662px;color:#262a30;font-weight:400;letter-spacing:0.000px;">Document best practices</div>
<div class="t md" style="left:1148.60px;top:330.00px;font-size:11.166375875628239px;line-height:11.166375875628239px;color:#262a30;font-weight:400;letter-spacing:0.000px;">for risk</div>
<svg style="position:absolute;left:1277.50px;top:318.00px;" width="9" height="9" viewBox="0 0 12 12" fill="none"><g stroke="#2a8ea0" stroke-width="1.1" stroke-linecap="round" stroke-linejoin="round" fill="none"><path d="M5 2 H2 V10 H10 V7 M7 2 H10 V5 M10 2 L5.5 6.5"/></g></svg>
<svg style="position:absolute;left:1150.50px;top:352.50px;" width="9" height="9" viewBox="0 0 12 12" fill="none"><g stroke="#b8bcc0" stroke-width="0.9" stroke-linecap="round" stroke-linejoin="round" fill="none"><rect x="1.5" y="3.5" width="9" height="5"/><path d="M6 3.5 V8.5"/></g></svg>
<div style="position:absolute;left:1167.00px;top:351.00px;width:1.20px;height:12.00px;background:#6b7077"></div>
<div class="t md" style="left:1171.00px;top:354.00px;font-size:8.804354327411927px;line-height:8.804354327411927px;color:#2b3037;font-weight:400;letter-spacing:0.000px;">To Do</div>
<svg style="position:absolute;left:1150.50px;top:374.00px;" width="9" height="9" viewBox="0 0 12 12" fill="none"><g stroke="#b0b4b8" stroke-width="0.9" stroke-linecap="round" stroke-linejoin="round" fill="none"><path d="M2 2.5 H10 V10.5 H2 Z M2 4.8 H10 M4 1.3 V3 M8 1.3 V3"/><rect x="3.6" y="6.3" width="1.6" height="1.6" fill="#b0b4b8"/></g></svg>
<div class="t md" style="left:1167.00px;top:374.00px;font-size:8.961191746118814px;line-height:8.961191746118814px;color:#2b3037;font-weight:400;letter-spacing:0.000px;">10/01/2025 - 11/01/2025</div>
<svg style="position:absolute;left:1150.50px;top:395.00px;" width="9" height="9" viewBox="0 0 12 12" fill="none"><g stroke="#b8bcc0" stroke-width="0.9" stroke-linecap="round" stroke-linejoin="round" fill="none"><circle cx="6" cy="6" r="4.3"/><path d="M6 3.5 V6 L7.5 7.5"/></g></svg>
<div class="t md" style="left:1167.00px;top:396.00px;font-size:9px;line-height:9px;color:#2b3037;font-weight:400;letter-spacing:-0.708px;">31d</div>
<div class="t m" style="left:1004.50px;width:300px;text-align:center;top:417.00px;font-size:9px;line-height:9px;color:#b8bcc0;font-weight:400;">%</div>
<div style="position:absolute;left:1167.00px;top:412.00px;width:120.50px;height:17.60px;border:1px solid #e6e8ea;border-radius:2px;background:#fff"></div>
<div class="t m" style="left:1173.00px;top:417.00px;font-size:9px;line-height:9px;color:#a9adb2;font-weight:400;">0%</div></body></html>
